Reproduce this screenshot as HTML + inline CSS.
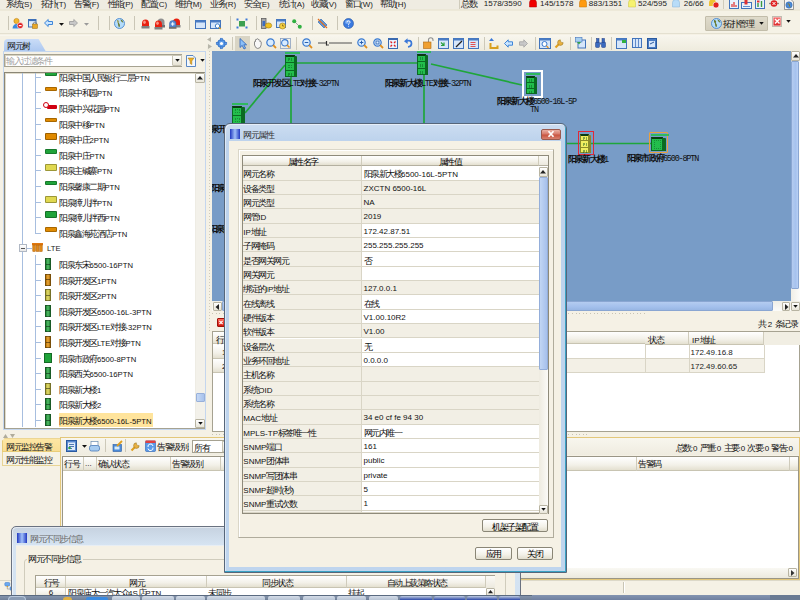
<!DOCTYPE html><html><head><meta charset="utf-8"><style>
html,body{margin:0;padding:0}
body{width:800px;height:600px;overflow:hidden;position:relative;background:#F5F1E5;font-family:"Liberation Sans",sans-serif}
div{position:absolute;box-sizing:border-box}
svg{overflow:visible}
.t{white-space:nowrap;line-height:10px;height:10px;}
i{display:inline-block;font-style:normal;text-align:center}
</style></head><body>
<div style="left:0.00px;top:0.00px;width:800.00px;height:600.00px;background:#F5F1E5"></div>
<div style="left:0.00px;top:0.00px;width:800.00px;height:9.00px;background:#EFECE2"></div>
<div style="left:0.00px;top:8.60px;width:800.00px;height:2.40px;background:linear-gradient(#EAE6D6,#EEEADA)"></div>
<div class="t" style="left:6.40px;top:-0.80px;font-size:8px;color:#222;"><i style="width:7.5px;font-size:9px">系</i><i style="width:7.5px;font-size:9px">统</i>(S)</div>
<div class="t" style="left:41.00px;top:-0.80px;font-size:8px;color:#222;"><i style="width:7.5px;font-size:9px">拓</i><i style="width:7.5px;font-size:9px">扑</i>(T)</div>
<div class="t" style="left:74.00px;top:-0.80px;font-size:8px;color:#222;"><i style="width:7.5px;font-size:9px">告</i><i style="width:7.5px;font-size:9px">警</i>(F)</div>
<div class="t" style="left:107.50px;top:-0.80px;font-size:8px;color:#222;"><i style="width:7.5px;font-size:9px">性</i><i style="width:7.5px;font-size:9px">能</i>(P)</div>
<div class="t" style="left:141.00px;top:-0.80px;font-size:8px;color:#222;"><i style="width:7.5px;font-size:9px">配</i><i style="width:7.5px;font-size:9px">置</i>(C)</div>
<div class="t" style="left:175.00px;top:-0.80px;font-size:8px;color:#222;"><i style="width:7.5px;font-size:9px">维</i><i style="width:7.5px;font-size:9px">护</i>(M)</div>
<div class="t" style="left:210.00px;top:-0.80px;font-size:8px;color:#222;"><i style="width:7.5px;font-size:9px">业</i><i style="width:7.5px;font-size:9px">务</i>(R)</div>
<div class="t" style="left:244.00px;top:-0.80px;font-size:8px;color:#222;"><i style="width:7.5px;font-size:9px">安</i><i style="width:7.5px;font-size:9px">全</i>(E)</div>
<div class="t" style="left:279.00px;top:-0.80px;font-size:8px;color:#222;"><i style="width:7.5px;font-size:9px">统</i><i style="width:7.5px;font-size:9px">计</i>(A)</div>
<div class="t" style="left:311.00px;top:-0.80px;font-size:8px;color:#222;"><i style="width:7.5px;font-size:9px">收</i><i style="width:7.5px;font-size:9px">藏</i>(V)</div>
<div class="t" style="left:345.00px;top:-0.80px;font-size:8px;color:#222;"><i style="width:7.5px;font-size:9px">窗</i><i style="width:7.5px;font-size:9px">口</i>(W)</div>
<div class="t" style="left:380.00px;top:-0.80px;font-size:8px;color:#222;"><i style="width:7.5px;font-size:9px">帮</i><i style="width:7.5px;font-size:9px">助</i>(H)</div>
<div style="left:459.00px;top:0.00px;width:1.00px;height:9.00px;background:#CFCBBB"></div>
<div class="t" style="left:461.00px;top:-1.20px;font-size:8px;color:#222;"><i style="width:7.5px;font-size:9px">总</i><i style="width:7.5px;font-size:9px">数</i>:</div>
<div class="t" style="left:483.80px;top:-1.20px;font-size:8px;color:#222;">1578/3590</div>
<svg style="position:absolute;left:528.5px;top:-1px" width="8" height="9" viewBox="0 0 8 9"><path d="M.5 8 V3.5 Q.5 .5 4 .5 Q7.5 .5 7.5 3.5 V8Z" fill="#F00000" stroke="#B00000" stroke-width=".5"/></svg>
<div class="t" style="left:540.00px;top:-1.20px;font-size:8px;color:#222;">145/1578</div>
<svg style="position:absolute;left:578.5px;top:-1px" width="8" height="9" viewBox="0 0 8 9"><path d="M.5 8 V3.5 Q.5 .5 4 .5 Q7.5 .5 7.5 3.5 V8Z" fill="#FF9A10" stroke="#C07000" stroke-width=".5"/></svg>
<div class="t" style="left:588.80px;top:-1.20px;font-size:8px;color:#222;">883/1351</div>
<svg style="position:absolute;left:627.5px;top:-1px" width="8" height="9" viewBox="0 0 8 9"><path d="M.5 8 V3.5 Q.5 .5 4 .5 Q7.5 .5 7.5 3.5 V8Z" fill="#F6F270" stroke="#C8C040" stroke-width=".5"/></svg>
<div class="t" style="left:638.00px;top:-1.20px;font-size:8px;color:#222;">524/595</div>
<svg style="position:absolute;left:672px;top:-1px" width="8" height="9" viewBox="0 0 8 9"><path d="M.5 8 V3.5 Q.5 .5 4 .5 Q7.5 .5 7.5 3.5 V8Z" fill="#B8DCF8" stroke="#80B0D8" stroke-width=".5"/></svg>
<div class="t" style="left:683.80px;top:-1.20px;font-size:8px;color:#222;">26/66</div>
<svg style="position:absolute;left:707.5px;top:-1px" width="12" height="10" viewBox="0 0 12 10"><path d="M1 7 V3.5 Q1 .5 4.5 .5 Q8 .5 8 3.5 V7Z" fill="#F0C030"/><circle cx="8" cy="6" r="3" fill="#E02020" stroke="#fff" stroke-width=".6"/></svg>
<div style="left:722.50px;top:0.00px;width:1.00px;height:9.00px;background:#CFCBBB"></div>
<svg style="position:absolute;left:728.5px;top:-1px" width="10" height="10" viewBox="0 0 10 10"><rect x=".5" y=".5" width="9" height="9" fill="#EAF2FC" stroke="#4274BC"/><path d="M3 8 V5 M5 8 V3 M7 8 V6" stroke="#E03030" stroke-width="1.2"/></svg>
<svg style="position:absolute;left:740.5px;top:-1px" width="11" height="10" viewBox="0 0 11 10"><rect x=".5" y="3.5" width="10" height="6" fill="#EAF2FC" stroke="#4274BC"/><rect x="3.5" y=".5" width="3" height="5" fill="#E03030"/><path d="M2 7.5 H9" stroke="#4274BC" stroke-width=".8"/></svg>
<svg style="position:absolute;left:754.5px;top:-1px" width="10" height="10" viewBox="0 0 10 10"><rect x=".5" y=".5" width="9" height="9" fill="#EAF2FC" stroke="#4274BC"/><path d="M3 8 V4 M6.5 8 V2" stroke="#3A9A40" stroke-width="1.4"/><rect x="2" y="1.5" width="2.5" height="2" fill="#E03030"/></svg>
<svg style="position:absolute;left:768.5px;top:-1px" width="10" height="9" viewBox="0 0 10 9"><path d="M0 4.5 H10" stroke="#8A8A8A" stroke-width="1.3"/><circle cx="5" cy="4.5" r="3.3" fill="#E02020"/><path d="M3.5 3 L6.5 6 M6.5 3 L3.5 6" stroke="#fff" stroke-width="1"/></svg>
<svg style="position:absolute;left:783.5px;top:-1px" width="10" height="11" viewBox="0 0 10 11"><path d="M.5 .5 H7 L9.5 3 V10.5 H.5Z" fill="#F4F4F4" stroke="#707070" stroke-width=".7"/><circle cx="5" cy="6" r="3.2" fill="#4A8AD8" stroke="#2A60A8" stroke-width=".5"/><path d="M3.5 5 Q5 4 5.5 6 Q5 7.5 6.5 8" stroke="#8A7A30" stroke-width="1" fill="none"/></svg>
<div style="left:0.00px;top:11.00px;width:800.00px;height:22.50px;background:#F5F2E6"></div>
<div style="left:0.00px;top:33.30px;width:800.00px;height:1.20px;background:#E4E0D0"></div>
<div style="left:0.00px;top:34.50px;width:800.00px;height:1.00px;background:#F8F6EE"></div>
<div style="left:7.50px;top:16.00px;width:1.00px;height:14.00px;background:#CAC6B6"></div>
<div style="left:97.50px;top:16.00px;width:1.00px;height:14.00px;background:#CAC6B6"></div>
<div style="left:108.50px;top:16.00px;width:1.00px;height:14.00px;background:#CAC6B6"></div>
<div style="left:134.00px;top:16.00px;width:1.00px;height:14.00px;background:#CAC6B6"></div>
<div style="left:189.00px;top:16.00px;width:1.00px;height:14.00px;background:#CAC6B6"></div>
<div style="left:230.00px;top:16.00px;width:1.00px;height:14.00px;background:#CAC6B6"></div>
<div style="left:256.00px;top:16.00px;width:1.00px;height:14.00px;background:#CAC6B6"></div>
<div style="left:312.00px;top:16.00px;width:1.00px;height:14.00px;background:#CAC6B6"></div>
<div style="left:337.00px;top:16.00px;width:1.00px;height:14.00px;background:#CAC6B6"></div>
<svg style="position:absolute;left:12px;top:17.5px" width="12" height="11" viewBox="0 0 12 11"><circle cx="4.5" cy="3" r="2.6" fill="#F2B830" stroke="#C08010" stroke-width=".6"/><path d="M0.5 10.5 Q1 6 4.5 6 Q8 6 8.5 10.5Z" fill="#3A8AE0"/><circle cx="8.2" cy="7.6" r="3" fill="#E02020" stroke="#fff" stroke-width=".6"/><path d="M6.8 7.6 H9.6" stroke="#fff" stroke-width="1.2"/></svg>
<svg style="position:absolute;left:27.5px;top:18.5px" width="10" height="10" viewBox="0 0 10 10"><rect x=".5" y=".5" width="7.5" height="7.5" fill="#DDEBFA" stroke="#3E70B8"/><rect x=".5" y=".5" width="7.5" height="1.6" fill="#3E70B8"/><rect x="4.5" y="5" width="5" height="4.5" fill="#E8A828" stroke="#9A6A10" stroke-width=".5"/><path d="M5.5 5 V3.8 Q7 2.2 8.5 3.8 V5" stroke="#777" fill="none" stroke-width=".8"/></svg>
<svg style="position:absolute;left:44px;top:19px" width="9" height="8" viewBox="0 0 9 8"><path d="M.5 4 L4.2 .5 V2.5 H8.5 V5.5 H4.2 V7.5Z" fill="#CBE6FF" stroke="#2C7AD6" stroke-width=".9"/></svg>
<svg style="position:absolute;left:59px;top:22.5px" width="5" height="3" viewBox="0 0 5 3"><path d="M0 0 H5 L2.5 2.8Z" fill="#111"/></svg>
<svg style="position:absolute;left:69px;top:19px" width="9" height="8" viewBox="0 0 9 8"><path d="M8.5 4 L4.8 .5 V2.5 H.5 V5.5 H4.8 V7.5Z" fill="#C8C8C8" stroke="#A0A0A0" stroke-width=".9"/></svg>
<svg style="position:absolute;left:84px;top:22.5px" width="5" height="3" viewBox="0 0 5 3"><path d="M0 0 H5 L2.5 2.8Z" fill="#9A9A9A"/></svg>
<svg style="position:absolute;left:113.5px;top:17.5px" width="11" height="11" viewBox="0 0 11 11"><circle cx="5.5" cy="5.5" r="5" fill="#B4DCFA" stroke="#4A88D0" stroke-width=".9"/><path d="M3 2 Q5 1.8 5.2 3.5 Q4.2 5 5.8 6.5 Q6.5 8.5 5 9.5 Q3.8 7 4 5.5 Q2.5 4 3 2Z M6.5 1.2 Q8.8 2 9.5 4.5 Q8 4.5 7 3Z" fill="#6A7A30"/><circle cx="4" cy="3.5" r="1.5" fill="#fff" opacity=".35"/></svg>
<svg style="position:absolute;left:141px;top:18.5px" width="9" height="10" viewBox="0 0 9 10"><path d="M1 7 V4.5 Q1 .5 4.5 .5 Q8 .5 8 4.5 V7Z" fill="#E82010"/><ellipse cx="3.5" cy="3.2" rx="1.3" ry="1.8" fill="#FFB0A0" opacity=".8"/><rect x=".5" y="7" width="8" height="2.5" fill="#808080"/></svg>
<svg style="position:absolute;left:156px;top:18px" width="9" height="10" viewBox="0 0 9 10"><path d="M1.5 7 V4 Q1.5 .5 5 .5 Q8.5 .5 8.5 4 V7Z" fill="#909090"/><rect x="1" y="7" width="8" height="2.5" fill="#707070"/></svg>
<svg style="position:absolute;left:154px;top:19.5px" width="9" height="10" viewBox="0 0 9 10"><path d="M1 7 V4.5 Q1 .5 4.5 .5 Q8 .5 8 4.5 V7Z" fill="#E82010"/><ellipse cx="3.5" cy="3.2" rx="1.3" ry="1.8" fill="#FFB0A0" opacity=".8"/><rect x=".5" y="7" width="8" height="2.5" fill="#808080"/></svg>
<svg style="position:absolute;left:169px;top:18px" width="12" height="11" viewBox="0 0 12 11"><path d="M4 7 V4 Q4 .5 7.5 .5 Q11 .5 11 4 V7Z" fill="#E82010"/><rect x="3.5" y="7" width="8" height="2.5" fill="#808080"/><path d="M.5 9 V5.5 Q.5 2.5 4 2.5 Q7 2.5 7 5.5 V9Z" fill="#5A8AD0" stroke="#3060A0" stroke-width=".5"/><path d="M2 6 H5.5 M3.7 4.2 V7.8" stroke="#fff" stroke-width="1"/><rect x="0" y="9" width="7.5" height="1.8" fill="#707070"/></svg>
<svg style="position:absolute;left:195px;top:19.5px" width="11" height="9" viewBox="0 0 11 9"><rect x=".5" y=".5" width="10" height="8" fill="#D6E6FA" stroke="#4274BC" stroke-width="1"/><rect x=".5" y=".5" width="10" height="2" fill="#4A7CC4"/></svg>
<svg style="position:absolute;left:210px;top:19.5px" width="11" height="9" viewBox="0 0 11 9"><rect x=".5" y=".5" width="10" height="8" fill="#D6E6FA" stroke="#4274BC" stroke-width="1"/><rect x=".5" y=".5" width="10" height="2" fill="#4A7CC4"/><circle cx="7.5" cy="6" r="2.2" fill="#fff" stroke="#2A70C0" stroke-width=".9"/><path d="M9 7.5 L10.8 9" stroke="#E0A020" stroke-width="1.2"/></svg>
<svg style="position:absolute;left:235.5px;top:17.5px" width="12" height="11" viewBox="0 0 12 11"><rect x="3" y="3" width="6" height="5.5" fill="#3CA050"/><g fill="#3C78D8"><rect x=".5" y=".5" width="2" height="2"/><rect x="9.5" y=".5" width="2" height="2"/><rect x=".5" y="8.5" width="2" height="2"/><rect x="9.5" y="8.5" width="2" height="2"/></g></svg>
<svg style="position:absolute;left:261px;top:17.5px" width="11" height="11" viewBox="0 0 11 11"><rect x=".5" y=".5" width="4.5" height="10" fill="#A8A8A8" stroke="#606060" stroke-width=".8"/><rect x="1.5" y="3" width="2.5" height="5" fill="#3C6CC0"/><ellipse cx="7.5" cy="7.5" rx="3.2" ry="2.6" fill="#F0C020" stroke="#A07810" stroke-width=".6"/></svg>
<svg style="position:absolute;left:276px;top:18.5px" width="10" height="9" viewBox="0 0 10 9"><rect x=".5" y=".5" width="9" height="8" fill="#D6E6FA" stroke="#4274BC" stroke-width="1"/><rect x=".5" y=".5" width="9" height="2" fill="#4A7CC4"/><circle cx="6.5" cy="7" r="3" fill="#F4D040" stroke="#A07810" stroke-width=".6"/><path d="M6.5 5.5 V7 H8" stroke="#604000" stroke-width=".6" fill="none"/></svg>
<svg style="position:absolute;left:292px;top:18.5px" width="10" height="10" viewBox="0 0 10 10"><path d="M2 2 L8 8" stroke="#A0A0A0" stroke-width="1"/><circle cx="2.2" cy="2.2" r="2" fill="#30B040"/><circle cx="7.8" cy="7.8" r="2" fill="#30B040"/></svg>
<svg style="position:absolute;left:316.5px;top:17.5px" width="11" height="11" viewBox="0 0 11 11"><path d="M1 4 L4 1 L10 7 L7 10Z" fill="#5A98E0" stroke="#2A60A8" stroke-width=".6"/><path d="M1 1 L10 10" stroke="#E07020" stroke-width="1.3"/></svg>
<svg style="position:absolute;left:342.5px;top:17.5px" width="11" height="11" viewBox="0 0 11 11"><circle cx="5.5" cy="5.5" r="5" fill="#3A7AE0" stroke="#2050A0" stroke-width=".6"/><circle cx="4" cy="4" r="2" fill="#9CC8FF" opacity=".6"/><path d="M4 4.3 Q4 2.8 5.6 2.8 Q7.2 2.8 7 4.3 Q6.8 5.3 5.6 5.8 V6.8 M5.6 7.8 V8.6" stroke="#fff" stroke-width="1" fill="none"/></svg>
<div style="left:704.50px;top:15.50px;width:63.50px;height:15.00px;background:linear-gradient(#DFDBCB,#D3CEBC);border:1px solid #C2BDAA;border-radius:1px"></div>
<svg style="position:absolute;left:710.5px;top:17.5px" width="11" height="11" viewBox="0 0 11 11"><circle cx="5.5" cy="5.5" r="5" fill="#B4DCFA" stroke="#4A88D0" stroke-width=".9"/><path d="M3 2 Q5 1.8 5.2 3.5 Q4.2 5 5.8 6.5 Q6.5 8.5 5 9.5 Q3.8 7 4 5.5 Q2.5 4 3 2Z M6.5 1.2 Q8.8 2 9.5 4.5 Q8 4.5 7 3Z" fill="#6A7A30"/></svg>
<div class="t" style="left:723.00px;top:19.20px;font-size:8px;color:#111;"><i style="width:7.5px;font-size:9px">拓</i><i style="width:7.5px;font-size:9px">扑</i><i style="width:7.5px;font-size:9px">管</i><i style="width:7.5px;font-size:9px">理</i></div>
<svg style="position:absolute;left:759px;top:22px" width="5" height="3" viewBox="0 0 6 4"><path d="M0 0 H6 L3 3.5 Z" fill="#111"/></svg>
<div style="left:771.50px;top:16.00px;width:10.50px;height:10.50px;background:linear-gradient(#F87070,#D82828);border:1px solid #C0BCB0;box-shadow:inset 0 0 0 .5px #F8D0D0"></div>
<svg style="position:absolute;left:773.5px;top:18px" width="6.5" height="6.5" viewBox="0 0 6.5 6.5"><path d="M1 1 L5.5 5.5 M5.5 1 L1 5.5" stroke="#fff" stroke-width="1.4"/></svg>
<svg style="position:absolute;left:786px;top:19.5px" width="5" height="3" viewBox="0 0 6 4"><path d="M0 0 H6 L3 3.5 Z" fill="#111"/></svg>
<div style="left:4px;top:38.7px;width:42px;height:13px;background:linear-gradient(#CADCF7,#ABC7F0);border-radius:4px 0 0 0;clip-path:polygon(0 0,82% 0,100% 100%,0 100%)"></div>
<div class="t" style="left:7.00px;top:41.00px;font-size:8px;color:#222;"><i style="width:7.5px;font-size:9px">网</i><i style="width:7.5px;font-size:9px">元</i><i style="width:7.5px;font-size:9px">树</i></div>
<div style="left:3.00px;top:51.00px;width:203.00px;height:1.00px;background:#A9C6F0"></div>
<div style="left:3.00px;top:51.00px;width:203.00px;height:379.00px;border:1px solid #C4D6EE"></div>
<div style="left:209.00px;top:51.00px;width:1.00px;height:280.00px;background:repeating-linear-gradient(#CFCBBB 0 1px,transparent 1px 3px)"></div>
<div style="left:4.00px;top:53.70px;width:178.00px;height:13.00px;background:#fff;border:1px solid #A6A291;border-right:none;box-shadow:inset 1px 1px 0 #D6D2C2"></div>
<div class="t" style="left:6.00px;top:56.20px;font-size:8px;color:#A0A0A0;"><i style="width:7.5px;font-size:9px">输</i><i style="width:7.5px;font-size:9px">入</i><i style="width:7.5px;font-size:9px">过</i><i style="width:7.5px;font-size:9px">滤</i><i style="width:7.5px;font-size:9px">条</i><i style="width:7.5px;font-size:9px">件</i></div>
<div style="left:171.50px;top:54.70px;width:10.50px;height:11.30px;background:linear-gradient(#FDFDFB,#E6E2D4);border:1px solid #C8C4B4;border-radius:1px"></div>
<svg style="position:absolute;left:174.5px;top:59px" width="5" height="3" viewBox="0 0 6 4"><path d="M0 0 H6 L3 3.5 Z" fill="#111"/></svg>
<svg style="position:absolute;left:185.5px;top:54.5px" width="10" height="12" viewBox="0 0 10 12"><path d="M.5 .5 H7 L9.5 3 V11.5 H.5Z" fill="#F4F8FC" stroke="#4A7CC0" stroke-width=".9"/><path d="M2 3 H8 L5.8 6 V9.5 L4.2 8.5 V6Z" fill="#F0B020" stroke="#A07010" stroke-width=".5"/></svg>
<svg style="position:absolute;left:199.5px;top:59px" width="5" height="3" viewBox="0 0 6 4"><path d="M0 0 H6 L3 3.5 Z" fill="#111"/></svg>
<div style="left:4.00px;top:72.40px;width:201.00px;height:357.00px;background:#fff;border:1px solid #A6A291;border-top-color:#8A8676;border-left-color:#8A8676;box-shadow:inset 1px 1px 0 #E0DCCC"></div>
<div style="left:5px;top:73.4px;width:190px;height:354px;overflow:hidden">
<div style="left:17.20px;top:-13.40px;width:1.00px;height:400.00px;background:#A7BEDF"></div>
<div style="left:29.70px;top:-13.40px;width:1.00px;height:174.00px;background:#A7BEDF"></div>
<div style="left:29.70px;top:181.60px;width:1.00px;height:200.00px;background:#A7BEDF"></div>
<div style="left:30.00px;top:3.50px;width:5.50px;height:1.00px;background:#A7BEDF"></div>
<div style="left:39.50px;top:-2.00px;width:12.50px;height:4.20px;background:#1FA33A;border:1px solid rgba(0,0,0,.25);border-radius:1px"></div>
<div class="t" style="left:54.40px;top:-0.50px;font-size:7.7px;color:#111;"><i style="width:7.5px;font-size:9px">阳</i><i style="width:7.5px;font-size:9px">泉</i><i style="width:7.5px;font-size:9px">中</i><i style="width:7.5px;font-size:9px">国</i><i style="width:7.5px;font-size:9px">人</i><i style="width:7.5px;font-size:9px">民</i><i style="width:7.5px;font-size:9px">银</i><i style="width:7.5px;font-size:9px">行</i><i style="width:7.5px;font-size:9px">二</i><i style="width:7.5px;font-size:9px">层</i>PTN</div>
<div style="left:30.00px;top:19.10px;width:5.50px;height:1.00px;background:#A7BEDF"></div>
<div style="left:39.50px;top:13.60px;width:12.50px;height:4.20px;background:#E08A00;border:1px solid rgba(0,0,0,.25);border-radius:1px"></div>
<div class="t" style="left:54.40px;top:15.10px;font-size:7.7px;color:#111;"><i style="width:7.5px;font-size:9px">阳</i><i style="width:7.5px;font-size:9px">泉</i><i style="width:7.5px;font-size:9px">中</i><i style="width:7.5px;font-size:9px">和</i><i style="width:7.5px;font-size:9px">园</i>PTN</div>
<div style="left:30.00px;top:34.70px;width:5.50px;height:1.00px;background:#A7BEDF"></div>
<div style="left:42.00px;top:31.20px;width:10.00px;height:4.50px;background:#D00010;border-radius:1px"></div>
<div style="left:38.00px;top:28.70px;width:6.00px;height:6.00px;background:#fff;border:1.5px solid #D00010;border-radius:50%"></div>
<div class="t" style="left:54.40px;top:30.70px;font-size:7.7px;color:#111;"><i style="width:7.5px;font-size:9px">阳</i><i style="width:7.5px;font-size:9px">泉</i><i style="width:7.5px;font-size:9px">中</i><i style="width:7.5px;font-size:9px">兴</i><i style="width:7.5px;font-size:9px">花</i><i style="width:7.5px;font-size:9px">园</i>PTN</div>
<div style="left:30.00px;top:50.30px;width:5.50px;height:1.00px;background:#A7BEDF"></div>
<div style="left:39.50px;top:44.80px;width:12.50px;height:4.20px;background:#E08A00;border:1px solid rgba(0,0,0,.25);border-radius:1px"></div>
<div class="t" style="left:54.40px;top:46.30px;font-size:7.7px;color:#111;"><i style="width:7.5px;font-size:9px">阳</i><i style="width:7.5px;font-size:9px">泉</i><i style="width:7.5px;font-size:9px">中</i><i style="width:7.5px;font-size:9px">移</i>PTN</div>
<div style="left:30.00px;top:65.90px;width:5.50px;height:1.00px;background:#A7BEDF"></div>
<div style="left:39.50px;top:59.90px;width:12.50px;height:7.00px;background:#E08A00;border:1px solid rgba(0,0,0,.3);border-radius:1px"></div>
<div class="t" style="left:54.40px;top:61.90px;font-size:7.7px;color:#111;"><i style="width:7.5px;font-size:9px">阳</i><i style="width:7.5px;font-size:9px">泉</i><i style="width:7.5px;font-size:9px">中</i><i style="width:7.5px;font-size:9px">庄</i>2PTN</div>
<div style="left:30.00px;top:81.50px;width:5.50px;height:1.00px;background:#A7BEDF"></div>
<div style="left:39.50px;top:76.00px;width:12.50px;height:4.20px;background:#1FA33A;border:1px solid rgba(0,0,0,.25);border-radius:1px"></div>
<div class="t" style="left:54.40px;top:77.50px;font-size:7.7px;color:#111;"><i style="width:7.5px;font-size:9px">阳</i><i style="width:7.5px;font-size:9px">泉</i><i style="width:7.5px;font-size:9px">中</i><i style="width:7.5px;font-size:9px">庄</i>PTN</div>
<div style="left:30.00px;top:97.10px;width:5.50px;height:1.00px;background:#A7BEDF"></div>
<div style="left:39.50px;top:91.10px;width:12.50px;height:7.00px;background:#E0D850;border:1px solid rgba(0,0,0,.3);border-radius:1px"></div>
<div class="t" style="left:54.40px;top:93.10px;font-size:7.7px;color:#111;"><i style="width:7.5px;font-size:9px">阳</i><i style="width:7.5px;font-size:9px">泉</i><i style="width:7.5px;font-size:9px">主</i><i style="width:7.5px;font-size:9px">碱</i><i style="width:7.5px;font-size:9px">寨</i>PTN</div>
<div style="left:30.00px;top:112.70px;width:5.50px;height:1.00px;background:#A7BEDF"></div>
<div style="left:39.50px;top:107.20px;width:12.50px;height:4.20px;background:#1FA33A;border:1px solid rgba(0,0,0,.25);border-radius:1px"></div>
<div class="t" style="left:54.40px;top:108.70px;font-size:7.7px;color:#111;"><i style="width:7.5px;font-size:9px">阳</i><i style="width:7.5px;font-size:9px">泉</i><i style="width:7.5px;font-size:9px">馨</i><i style="width:7.5px;font-size:9px">康</i><i style="width:7.5px;font-size:9px">二</i><i style="width:7.5px;font-size:9px">期</i>PTN</div>
<div style="left:30.00px;top:128.30px;width:5.50px;height:1.00px;background:#A7BEDF"></div>
<div style="left:39.50px;top:122.30px;width:12.50px;height:7.00px;background:#E0D850;border:1px solid rgba(0,0,0,.3);border-radius:1px"></div>
<div class="t" style="left:54.40px;top:124.30px;font-size:7.7px;color:#111;"><i style="width:7.5px;font-size:9px">阳</i><i style="width:7.5px;font-size:9px">泉</i><i style="width:7.5px;font-size:9px">獐</i><i style="width:7.5px;font-size:9px">儿</i><i style="width:7.5px;font-size:9px">拌</i>PTN</div>
<div style="left:30.00px;top:143.90px;width:5.50px;height:1.00px;background:#A7BEDF"></div>
<div style="left:39.50px;top:137.90px;width:12.50px;height:7.00px;background:#1FA33A;border:1px solid rgba(0,0,0,.3);border-radius:1px"></div>
<div class="t" style="left:54.40px;top:139.90px;font-size:7.7px;color:#111;"><i style="width:7.5px;font-size:9px">阳</i><i style="width:7.5px;font-size:9px">泉</i><i style="width:7.5px;font-size:9px">獐</i><i style="width:7.5px;font-size:9px">儿</i><i style="width:7.5px;font-size:9px">拌</i><i style="width:7.5px;font-size:9px">西</i>PTN</div>
<div style="left:30.00px;top:159.50px;width:5.50px;height:1.00px;background:#A7BEDF"></div>
<div style="left:39.50px;top:154.00px;width:12.50px;height:4.20px;background:#E08A00;border:1px solid rgba(0,0,0,.25);border-radius:1px"></div>
<div class="t" style="left:54.40px;top:155.50px;font-size:7.7px;color:#111;"><i style="width:7.5px;font-size:9px">阳</i><i style="width:7.5px;font-size:9px">泉</i><i style="width:7.5px;font-size:9px">鑫</i><i style="width:7.5px;font-size:9px">海</i><i style="width:7.5px;font-size:9px">苑</i><i style="width:7.5px;font-size:9px">酒</i><i style="width:7.5px;font-size:9px">店</i>PTN</div>
<div style="left:14.00px;top:171.10px;width:8.00px;height:8.00px;background:linear-gradient(#fff,#E8E8E8);border:1px solid #B0B8C4"></div>
<div style="left:15.80px;top:174.60px;width:4.50px;height:1.00px;background:#555"></div>
<div style="left:22.00px;top:175.10px;width:5.00px;height:1.00px;background:#A7BEDF"></div>
<svg style="position:absolute;left:27px;top:170.1px" width="11" height="9" viewBox="0 0 11 9"><rect x="0" y="0" width="11" height="2.2" fill="#E07810"/><g fill="#E08A18" stroke="#B05A00" stroke-width=".5"><rect x=".8" y="2" width="2.6" height="6.5"/><rect x="4.2" y="2" width="2.6" height="6.5"/><rect x="7.6" y="2" width="2.6" height="6.5"/></g></svg>
<div class="t" style="left:42.00px;top:171.10px;font-size:7.7px;color:#222;">LTE</div>
<div style="left:30.00px;top:190.70px;width:5.50px;height:1.00px;background:#A7BEDF"></div>
<div style="left:39.50px;top:184.70px;width:6.00px;height:12.00px;background:linear-gradient(90deg,rgba(0,0,0,.15),rgba(255,255,255,.25) 50%,rgba(0,0,0,.2)),#1FA33A;border:1px solid rgba(0,0,0,.4)"></div>
<div style="left:40.50px;top:190.20px;width:4.00px;height:1.00px;background:rgba(0,0,0,.45)"></div>
<div class="t" style="left:54.40px;top:186.70px;font-size:7.7px;color:#111;"><i style="width:7.5px;font-size:9px">阳</i><i style="width:7.5px;font-size:9px">泉</i><i style="width:7.5px;font-size:9px">东</i><i style="width:7.5px;font-size:9px">宋</i>6500-16PTN</div>
<div style="left:30.00px;top:206.30px;width:5.50px;height:1.00px;background:#A7BEDF"></div>
<div style="left:39.50px;top:200.30px;width:6.00px;height:12.00px;background:linear-gradient(90deg,rgba(0,0,0,.15),rgba(255,255,255,.25) 50%,rgba(0,0,0,.2)),#E08A00;border:1px solid rgba(0,0,0,.4)"></div>
<div style="left:40.50px;top:205.80px;width:4.00px;height:1.00px;background:rgba(0,0,0,.45)"></div>
<div class="t" style="left:54.40px;top:202.30px;font-size:7.7px;color:#111;"><i style="width:7.5px;font-size:9px">阳</i><i style="width:7.5px;font-size:9px">泉</i><i style="width:7.5px;font-size:9px">开</i><i style="width:7.5px;font-size:9px">发</i><i style="width:7.5px;font-size:9px">区</i>1PTN</div>
<div style="left:30.00px;top:221.90px;width:5.50px;height:1.00px;background:#A7BEDF"></div>
<div style="left:39.50px;top:215.90px;width:6.00px;height:12.00px;background:linear-gradient(90deg,rgba(0,0,0,.15),rgba(255,255,255,.25) 50%,rgba(0,0,0,.2)),#D8D040;border:1px solid rgba(0,0,0,.4)"></div>
<div style="left:40.50px;top:221.40px;width:4.00px;height:1.00px;background:rgba(0,0,0,.45)"></div>
<div class="t" style="left:54.40px;top:217.90px;font-size:7.7px;color:#111;"><i style="width:7.5px;font-size:9px">阳</i><i style="width:7.5px;font-size:9px">泉</i><i style="width:7.5px;font-size:9px">开</i><i style="width:7.5px;font-size:9px">发</i><i style="width:7.5px;font-size:9px">区</i>2PTN</div>
<div style="left:30.00px;top:237.50px;width:5.50px;height:1.00px;background:#A7BEDF"></div>
<div style="left:39.50px;top:231.50px;width:6.00px;height:12.00px;background:linear-gradient(90deg,rgba(0,0,0,.15),rgba(255,255,255,.25) 50%,rgba(0,0,0,.2)),#1FA33A;border:1px solid rgba(0,0,0,.4)"></div>
<div style="left:40.50px;top:237.00px;width:4.00px;height:1.00px;background:rgba(0,0,0,.45)"></div>
<div class="t" style="left:54.40px;top:233.50px;font-size:7.7px;color:#111;"><i style="width:7.5px;font-size:9px">阳</i><i style="width:7.5px;font-size:9px">泉</i><i style="width:7.5px;font-size:9px">开</i><i style="width:7.5px;font-size:9px">发</i><i style="width:7.5px;font-size:9px">区</i>6500-16L-3PTN</div>
<div style="left:30.00px;top:253.10px;width:5.50px;height:1.00px;background:#A7BEDF"></div>
<div style="left:39.50px;top:247.10px;width:6.00px;height:12.00px;background:linear-gradient(90deg,rgba(0,0,0,.15),rgba(255,255,255,.25) 50%,rgba(0,0,0,.2)),#1FA33A;border:1px solid rgba(0,0,0,.4)"></div>
<div style="left:40.50px;top:252.60px;width:4.00px;height:1.00px;background:rgba(0,0,0,.45)"></div>
<div class="t" style="left:54.40px;top:249.10px;font-size:7.7px;color:#111;"><i style="width:7.5px;font-size:9px">阳</i><i style="width:7.5px;font-size:9px">泉</i><i style="width:7.5px;font-size:9px">开</i><i style="width:7.5px;font-size:9px">发</i><i style="width:7.5px;font-size:9px">区</i>LTE<i style="width:7.5px;font-size:9px">对</i><i style="width:7.5px;font-size:9px">接</i>-32PTN</div>
<div style="left:30.00px;top:268.70px;width:5.50px;height:1.00px;background:#A7BEDF"></div>
<div style="left:39.50px;top:262.70px;width:6.00px;height:12.00px;background:linear-gradient(90deg,rgba(0,0,0,.15),rgba(255,255,255,.25) 50%,rgba(0,0,0,.2)),#E08A00;border:1px solid rgba(0,0,0,.4)"></div>
<div style="left:40.50px;top:268.20px;width:4.00px;height:1.00px;background:rgba(0,0,0,.45)"></div>
<div class="t" style="left:54.40px;top:264.70px;font-size:7.7px;color:#111;"><i style="width:7.5px;font-size:9px">阳</i><i style="width:7.5px;font-size:9px">泉</i><i style="width:7.5px;font-size:9px">开</i><i style="width:7.5px;font-size:9px">发</i><i style="width:7.5px;font-size:9px">区</i>LTE<i style="width:7.5px;font-size:9px">对</i><i style="width:7.5px;font-size:9px">接</i>PTN</div>
<div style="left:30.00px;top:284.30px;width:5.50px;height:1.00px;background:#A7BEDF"></div>
<div style="left:39.00px;top:279.30px;width:8.00px;height:10.00px;background:#1FA33A;border:1px solid rgba(0,0,0,.35)"></div>
<div class="t" style="left:54.40px;top:280.30px;font-size:7.7px;color:#111;"><i style="width:7.5px;font-size:9px">阳</i><i style="width:7.5px;font-size:9px">泉</i><i style="width:7.5px;font-size:9px">市</i><i style="width:7.5px;font-size:9px">政</i><i style="width:7.5px;font-size:9px">府</i>6500-8PTN</div>
<div style="left:30.00px;top:299.90px;width:5.50px;height:1.00px;background:#A7BEDF"></div>
<div style="left:39.50px;top:293.90px;width:6.00px;height:12.00px;background:linear-gradient(90deg,rgba(0,0,0,.15),rgba(255,255,255,.25) 50%,rgba(0,0,0,.2)),#1FA33A;border:1px solid rgba(0,0,0,.4)"></div>
<div style="left:40.50px;top:299.40px;width:4.00px;height:1.00px;background:rgba(0,0,0,.45)"></div>
<div class="t" style="left:54.40px;top:295.90px;font-size:7.7px;color:#111;"><i style="width:7.5px;font-size:9px">阳</i><i style="width:7.5px;font-size:9px">泉</i><i style="width:7.5px;font-size:9px">西</i><i style="width:7.5px;font-size:9px">关</i>6500-16PTN</div>
<div style="left:30.00px;top:315.50px;width:5.50px;height:1.00px;background:#A7BEDF"></div>
<div style="left:39.50px;top:309.50px;width:6.00px;height:12.00px;background:linear-gradient(90deg,rgba(0,0,0,.15),rgba(255,255,255,.25) 50%,rgba(0,0,0,.2)),#D8D040;border:1px solid rgba(0,0,0,.4)"></div>
<div style="left:40.50px;top:315.00px;width:4.00px;height:1.00px;background:rgba(0,0,0,.45)"></div>
<div class="t" style="left:54.40px;top:311.50px;font-size:7.7px;color:#111;"><i style="width:7.5px;font-size:9px">阳</i><i style="width:7.5px;font-size:9px">泉</i><i style="width:7.5px;font-size:9px">新</i><i style="width:7.5px;font-size:9px">大</i><i style="width:7.5px;font-size:9px">楼</i>1</div>
<div style="left:30.00px;top:331.10px;width:5.50px;height:1.00px;background:#A7BEDF"></div>
<div style="left:39.50px;top:325.10px;width:6.00px;height:12.00px;background:linear-gradient(90deg,rgba(0,0,0,.15),rgba(255,255,255,.25) 50%,rgba(0,0,0,.2)),#1FA33A;border:1px solid rgba(0,0,0,.4)"></div>
<div style="left:40.50px;top:330.60px;width:4.00px;height:1.00px;background:rgba(0,0,0,.45)"></div>
<div class="t" style="left:54.40px;top:327.10px;font-size:7.7px;color:#111;"><i style="width:7.5px;font-size:9px">阳</i><i style="width:7.5px;font-size:9px">泉</i><i style="width:7.5px;font-size:9px">新</i><i style="width:7.5px;font-size:9px">大</i><i style="width:7.5px;font-size:9px">楼</i>2</div>
<div style="left:30.00px;top:346.70px;width:5.50px;height:1.00px;background:#A7BEDF"></div>
<div style="left:39.50px;top:340.70px;width:6.00px;height:12.00px;background:linear-gradient(90deg,rgba(0,0,0,.15),rgba(255,255,255,.25) 50%,rgba(0,0,0,.2)),#1FA33A;border:1px solid rgba(0,0,0,.4)"></div>
<div style="left:40.50px;top:346.20px;width:4.00px;height:1.00px;background:rgba(0,0,0,.45)"></div>
<div style="left:53.80px;top:339.70px;width:94.20px;height:14.00px;background:#FFE49C"></div>
<div class="t" style="left:54.40px;top:342.70px;font-size:7.7px;color:#111;"><i style="width:7.5px;font-size:9px">阳</i><i style="width:7.5px;font-size:9px">泉</i><i style="width:7.5px;font-size:9px">新</i><i style="width:7.5px;font-size:9px">大</i><i style="width:7.5px;font-size:9px">楼</i>6500-16L-5PTN</div>
</div>
<div style="left:195.00px;top:73.40px;width:10.00px;height:354.00px;background:#F3F1EA;border-left:1px solid #EEECE4"></div>
<div style="left:195.00px;top:73.40px;width:10.00px;height:9.50px;background:linear-gradient(#FFFFFF,#E8E5D8);border:1px solid #B8B4A2;border-radius:1px"></div>
<svg style="position:absolute;left:197px;top:76px" width="6" height="4" viewBox="0 0 6 4"><path d="M0 3.5 H6 L3 0 Z" fill="#222"/></svg>
<div style="left:195.00px;top:418.50px;width:10.00px;height:9.50px;background:linear-gradient(#FFFFFF,#E8E5D8);border:1px solid #B8B4A2;border-radius:1px"></div>
<svg style="position:absolute;left:197.5px;top:422px" width="5" height="3" viewBox="0 0 6 4"><path d="M0 0 H6 L3 3.5 Z" fill="#111"/></svg>
<div style="left:195.50px;top:392.50px;width:9.00px;height:9.00px;background:linear-gradient(90deg,#C5D8F5,#A8C2EC);border:1px solid #98B0DA;border-radius:1px"></div>
<svg style="position:absolute;left:2.5px;top:433.5px" width="12" height="4" viewBox="0 0 12 4"><path d="M0 4 L2.5 0 L5 4 Z M7 0 H12 L9.5 4 Z" fill="#B0AC9C"/></svg>
<div style="left:207.00px;top:35.00px;width:593.00px;height:16.00px;background:linear-gradient(#F8F6EE,#EEEBDD)"></div>
<svg style="position:absolute;left:207px;top:37px" width="5" height="12" viewBox="0 0 5 12"><path d="M4 0 L0 2.5 L4 5 Z M1 7 L5 9.5 L1 12 Z" fill="#B8B6AA"/></svg>
<div style="left:235.00px;top:36.00px;width:14.50px;height:15.00px;background:#D9D5C5"></div>
<div style="left:232.00px;top:37.00px;width:1.00px;height:13.00px;background:#CDC9B9"></div>
<div style="left:296.00px;top:37.00px;width:1.00px;height:13.00px;background:#CDC9B9"></div>
<div style="left:417.80px;top:37.00px;width:1.00px;height:13.00px;background:#CDC9B9"></div>
<div style="left:484.00px;top:37.00px;width:1.00px;height:13.00px;background:#CDC9B9"></div>
<div style="left:535.00px;top:37.00px;width:1.00px;height:13.00px;background:#CDC9B9"></div>
<div style="left:570.00px;top:37.00px;width:1.00px;height:13.00px;background:#CDC9B9"></div>
<div style="left:591.00px;top:37.00px;width:1.00px;height:13.00px;background:#CDC9B9"></div>
<div style="left:611.00px;top:37.00px;width:1.00px;height:13.00px;background:#CDC9B9"></div>
<svg style="position:absolute;left:215.5px;top:37.5px" width="11" height="11" viewBox="0 0 11 11"><g transform="translate(5.5 5.5)"><circle r="4" fill="#5A9AE8" stroke="#2A68C0" stroke-width=".8"/><g fill="#5A9AE8" stroke="#2A68C0" stroke-width=".5"><rect x="-1" y="-5.3" width="2" height="2"/><rect x="-1" y="3.3" width="2" height="2"/><rect x="-5.3" y="-1" width="2" height="2"/><rect x="3.3" y="-1" width="2" height="2"/></g><circle r="1.6" fill="#fff"/></g></svg>
<svg style="position:absolute;left:239px;top:37.5px" width="8" height="12" viewBox="0 0 8 12"><path d="M1 .5 V9.5 L3.2 7.4 L5 11 L6.6 10.2 L4.8 6.8 H7.6 Z" fill="#8CC0F8" stroke="#2860B8" stroke-width=".8"/></svg>
<svg style="position:absolute;left:251.5px;top:37.5px" width="11" height="11" viewBox="0 0 11 11"><path d="M2.5 7 V4 Q2.5 3 3.5 3.5 V2 Q3.5 1 4.5 1.5 V1.2 Q5.5 .2 6.3 1.2 V1.8 Q7.3 1.2 7.8 2.3 V3.5 Q8.8 3 9.2 4 V6.8 Q8.8 10.5 5.8 10.5 Q3.5 10.5 2.5 7Z" fill="#F8F8F8" stroke="#707070" stroke-width=".8"/></svg>
<svg style="position:absolute;left:265.5px;top:37.5px" width="11" height="11" viewBox="0 0 11 11"><circle cx="4.5" cy="4.5" r="3.7" fill="#D8ECFF" stroke="#3A7AD0" stroke-width="1.2"/><path d="M7.2 7.2 L10 10" stroke="#E09020" stroke-width="1.8"/></svg>
<svg style="position:absolute;left:279.5px;top:37.5px" width="11" height="11" viewBox="0 0 11 11"><rect x=".5" y=".5" width="10" height="10" fill="none" stroke="#8AA0C0" stroke-width=".8"/><circle cx="4.8" cy="4.8" r="3.2" fill="#D8ECFF" stroke="#3A7AD0" stroke-width="1.1"/><path d="M7 7 L9.5 9.5" stroke="#E09020" stroke-width="1.6"/></svg>
<svg style="position:absolute;left:301.5px;top:37.5px" width="11" height="11" viewBox="0 0 11 11"><circle cx="4.5" cy="4.5" r="3.7" fill="#D8ECFF" stroke="#3A7AD0" stroke-width="1.2"/><path d="M7.2 7.2 L10 10" stroke="#E09020" stroke-width="1.8"/><path d="M2.7 4.5 H6.3" stroke="#2A60B0" stroke-width="1"/></svg>
<svg style="position:absolute;left:318px;top:40px" width="34" height="6" viewBox="0 0 34 6"><path d="M0 3 H8.5 V5 H11 M11 3 H34" stroke="#505050" stroke-width="1" fill="none"/><path d="M8.5 1 V5.5" stroke="#303030" stroke-width="1.2"/></svg>
<svg style="position:absolute;left:356.5px;top:37.5px" width="11" height="11" viewBox="0 0 11 11"><circle cx="4.5" cy="4.5" r="3.7" fill="#D8ECFF" stroke="#3A7AD0" stroke-width="1.2"/><path d="M7.2 7.2 L10 10" stroke="#E09020" stroke-width="1.8"/><path d="M2.7 4.5 H6.3 M4.5 2.7 V6.3" stroke="#2A60B0" stroke-width="1"/></svg>
<svg style="position:absolute;left:372.5px;top:37.5px" width="11" height="11" viewBox="0 0 11 11"><circle cx="4.5" cy="4.5" r="3.7" fill="#D8ECFF" stroke="#3A7AD0" stroke-width="1.2"/><path d="M7.2 7.2 L10 10" stroke="#E09020" stroke-width="1.8"/><rect x="3" y="3" width="3" height="3" fill="none" stroke="#2A60B0" stroke-width=".8"/></svg>
<svg style="position:absolute;left:387.5px;top:37.5px" width="10" height="11" viewBox="0 0 10 11"><rect x=".5" y=".5" width="9" height="10" fill="#EAF2FC" stroke="#3A6AB0" stroke-width="1"/><rect x=".5" y=".5" width="9" height="1.5" fill="#3A6AB0"/><path d="M2.5 3.5 L4 5 M7.5 3.5 L6 5 M2.5 8.5 L4 7 M7.5 8.5 L6 7" stroke="#E02020" stroke-width="1.3"/></svg>
<svg style="position:absolute;left:404px;top:38px" width="9" height="10" viewBox="0 0 9 10"><path d="M2.5 3 Q7.5 1.5 7.5 5.5 Q7.5 8.5 4 9" stroke="#3A78D8" stroke-width="1.7" fill="none"/><path d="M0 3.2 L3.6 .2 L3.6 6Z" fill="#3A78D8"/></svg>
<svg style="position:absolute;left:422.5px;top:37px" width="11" height="12" viewBox="0 0 11 12"><path d="M5.5 5 V3 Q5.5 .8 7.8 .8 Q10 .8 10 3 V4" stroke="#909090" stroke-width="1.1" fill="none"/><rect x=".5" y="5" width="7.5" height="6.5" fill="#F0A030" stroke="#B06810" stroke-width=".6"/></svg>
<svg style="position:absolute;left:437.5px;top:37.5px" width="11" height="11" viewBox="0 0 11 11"><rect x=".5" y=".5" width="10" height="10" fill="#D6E6FA" stroke="#4274BC" stroke-width="1"/><rect x=".5" y=".5" width="10" height="2" fill="#4A7CC4"/><path d="M3 4.5 L6 7.5 M6 4.5 V7.5 H3" stroke="#2AA040" stroke-width="1.2" fill="none"/></svg>
<svg style="position:absolute;left:452.5px;top:37.5px" width="11" height="11" viewBox="0 0 11 11"><rect x=".5" y=".5" width="10" height="10" fill="#D6E6FA" stroke="#4274BC" stroke-width="1"/><rect x=".5" y=".5" width="10" height="2" fill="#4A7CC4"/><path d="M3 9 L9 3" stroke="#222" stroke-width="1.3"/></svg>
<svg style="position:absolute;left:467.5px;top:37.5px" width="11" height="11" viewBox="0 0 11 11"><rect x=".5" y=".5" width="10" height="10" fill="#D6E6FA" stroke="#4274BC" stroke-width="1"/><rect x=".5" y=".5" width="10" height="2" fill="#4A7CC4"/><path d="M2.5 4.5 H7.5 M2.5 6.5 H7.5 M2.5 8.5 H7.5" stroke="#E04040" stroke-width=".9"/></svg>
<svg style="position:absolute;left:489px;top:37px" width="9" height="12" viewBox="0 0 9 12"><path d="M1.5 6 V11 H8.5 V8.5" stroke="#D8A020" stroke-width="2" fill="none"/><path d="M0 4 L2.5 1 L5 4Z" fill="#3A78D8"/></svg>
<svg style="position:absolute;left:503.5px;top:38.5px" width="9" height="9" viewBox="0 0 9 9"><path d="M.5 4.5 L4.2 .8 V2.8 H8.5 V6.2 H4.2 V8.2Z" fill="#CBE6FF" stroke="#2C7AD6" stroke-width=".9"/></svg>
<svg style="position:absolute;left:518.5px;top:38.5px" width="9" height="9" viewBox="0 0 9 9"><path d="M8.5 4.5 L4.8 .8 V2.8 H.5 V6.2 H4.8 V8.2Z" fill="#C8C8C8" stroke="#A8A8A8" stroke-width=".9"/></svg>
<svg style="position:absolute;left:539px;top:37.5px" width="12" height="11" viewBox="0 0 12 11"><rect x=".5" y=".5" width="11" height="10" fill="#D6E6FA" stroke="#4274BC" stroke-width="1"/><rect x=".5" y=".5" width="11" height="2" fill="#4A7CC4"/><circle cx="5.5" cy="6" r="2.5" fill="#fff" stroke="#3A7AD0" stroke-width="1"/><path d="M7.5 8 L9.5 10" stroke="#E09020" stroke-width="1.2"/></svg>
<svg style="position:absolute;left:554px;top:37.5px" width="11" height="11" viewBox="0 0 11 11"><path d="M1.5 9.5 L6 5" stroke="#E0A020" stroke-width="2.2"/><path d="M6.3 1.8 A2.8 2.8 0 1 0 9.2 4.7 L7.8 4.5 L6.5 3.2Z" fill="#E8B040" stroke="#907020" stroke-width=".5"/></svg>
<svg style="position:absolute;left:574.5px;top:37px" width="11" height="12" viewBox="0 0 11 12"><rect x="3" y="3" width="7.5" height="8" fill="#D6E6FA" stroke="#4274BC"/><rect x=".5" y=".5" width="6.5" height="4.5" fill="#A8D0F0" stroke="#4274BC" stroke-width=".6"/><path d="M2 5 L4 7.5 L6 5" fill="#30A040"/></svg>
<svg style="position:absolute;left:595px;top:37.5px" width="11" height="10" viewBox="0 0 11 10"><g fill="#3A6AC0" stroke="#203C80" stroke-width=".5"><rect x=".5" y="4" width="4" height="5.5" rx="1"/><rect x="6.5" y="4" width="4" height="5.5" rx="1"/><rect x="1.5" y=".5" width="2.5" height="4"/><rect x="7" y=".5" width="2.5" height="4"/></g><rect x="4.5" y="4.5" width="2" height="2" fill="#3A6AC0"/></svg>
<svg style="position:absolute;left:616px;top:37.5px" width="11" height="11" viewBox="0 0 11 11"><rect x=".5" y=".5" width="10" height="10" fill="#D6E6FA" stroke="#4274BC" stroke-width="1"/><rect x=".5" y=".5" width="10" height="2" fill="#4A7CC4"/><rect x="6" y="2" width="4" height="3" fill="#30B040"/></svg>
<svg style="position:absolute;left:631.5px;top:38px" width="10" height="10" viewBox="0 0 10 10"><rect x=".5" y=".5" width="9" height="9" fill="#D6E6FA" stroke="#4274BC"/><path d="M3.5 .5 V9.5 M6.5 .5 V9.5" stroke="#4274BC" stroke-width=".8"/></svg>
<svg style="position:absolute;left:646.5px;top:37.5px" width="10" height="11" viewBox="0 0 10 11"><rect x=".5" y=".5" width="9" height="10" fill="#4A7CC4" stroke="#2A5AA0"/><rect x="2" y="3" width="6" height="6" fill="#D6E6FA"/><path d="M3 6 L7 4" stroke="#2A5AA0" stroke-width="1"/></svg>
<div style="left:211.50px;top:50.50px;width:579.50px;height:250.50px;background:#789CC7"></div>
<div style="left:791.00px;top:50.50px;width:9.00px;height:250.50px;background:linear-gradient(90deg,#F0EEE6,#FCFCFA)"></div>
<div style="left:791.00px;top:51.00px;width:9.00px;height:9.50px;background:linear-gradient(#FFFFFF,#E8E5D8);border:1px solid #B8B4A2;border-radius:1px"></div>
<svg style="position:absolute;left:792.5px;top:54px" width="6" height="4" viewBox="0 0 6 4"><path d="M0 3.5 H6 L3 0 Z" fill="#222"/></svg>
<div style="left:791.30px;top:61.00px;width:8.20px;height:228.30px;background:linear-gradient(90deg,#B4CCF0,#A6C2EE 60%,#B8D0F4);border:1px solid #8AA6D2;border-radius:1px"></div>
<div style="left:211.50px;top:301.00px;width:588.50px;height:9.80px;background:linear-gradient(#F0EEE6,#FCFCFA)"></div>
<div style="left:212.50px;top:301.50px;width:9.00px;height:9.00px;background:linear-gradient(#FFFFFF,#E8E5D8);border:1px solid #B8B4A2;border-radius:1px"></div>
<div style="left:222.00px;top:301.30px;width:550.70px;height:9.30px;background:linear-gradient(#B4CCF0,#A4C0EC 60%,#98B6E4);border:1px solid #8AA6D2;border-radius:1px"></div>
<div style="left:781.70px;top:301.50px;width:8.50px;height:9.00px;background:linear-gradient(#FFFFFF,#E8E5D8);border:1px solid #B8B4A2;border-radius:1px"></div>
<svg style="position:absolute;left:784.5px;top:303.5px" width="4" height="6" viewBox="0 0 4 6"><path d="M0 0 V6 L3.5 3 Z" fill="#222"/></svg>
<div style="left:790.50px;top:301.50px;width:9.00px;height:9.00px;background:linear-gradient(#FFFFFF,#E8E5D8);border:1px solid #B8B4A2;border-radius:1px"></div>
<svg style="position:absolute;left:793px;top:305px" width="5" height="3" viewBox="0 0 6 4"><path d="M0 0 H6 L3 3.5 Z" fill="#111"/></svg>
<svg style="position:absolute;left:215px;top:303.5px" width="4" height="6" viewBox="0 0 4 6"><path d="M4 0 V6 L0.5 3 Z" fill="#222"/></svg>
<div style="left:212.00px;top:312.50px;width:434.00px;height:1.00px;background:repeating-linear-gradient(90deg,#C8C4B4 0 1px,transparent 1px 3.6px)"></div>
<div style="left:209.50px;top:34.00px;width:1.00px;height:300.00px;background:repeating-linear-gradient(#C8C4B4 0 1px,transparent 1px 3px);opacity:.0"></div>
<div style="left:211.5px;top:50.5px;width:579.5px;height:250.5px;overflow:hidden"><div style="left:-211.5px;top:-50.5px;width:800px;height:600px">
<svg style="position:absolute;left:0;top:0" width="800" height="600"><line x1="297" y1="63" x2="417" y2="63" stroke="#1FA63A" stroke-width="1.7"/></svg>
<svg style="position:absolute;left:0;top:0" width="800" height="600"><line x1="291" y1="76" x2="291" y2="125" stroke="#1FA63A" stroke-width="1.7"/></svg>
<svg style="position:absolute;left:0;top:0" width="800" height="600"><line x1="285" y1="65" x2="245" y2="113" stroke="#1FA63A" stroke-width="1.7"/></svg>
<svg style="position:absolute;left:0;top:0" width="800" height="600"><line x1="424" y1="75" x2="424" y2="125" stroke="#1FA63A" stroke-width="1.7"/></svg>
<svg style="position:absolute;left:0;top:0" width="800" height="600"><line x1="431" y1="64" x2="522" y2="85" stroke="#1FA63A" stroke-width="1.7"/></svg>
<svg style="position:absolute;left:0;top:0" width="800" height="600"><line x1="560" y1="143.5" x2="651" y2="143.5" stroke="#1FA63A" stroke-width="1.7"/></svg>
<div style="left:284.50px;top:52.00px;width:15.00px;height:2.00px;background:#22BE4C;opacity:.85"></div>
<div style="left:285.00px;top:55.00px;width:9.60px;height:22.00px;background:#22BE4C;border:1px solid #0B6A22;border-top:2px solid #0A3A12"></div>
<div style="left:294.60px;top:56.00px;width:2.40px;height:21.00px;background:#0B6A22;border-top-right-radius:1px"></div>
<div style="left:286.00px;top:62.33px;width:8.60px;height:1.00px;background:#0B6A22"></div>
<div style="left:286.00px;top:69.67px;width:8.60px;height:1.00px;background:#0B6A22"></div>
<div style="left:287.50px;top:58.00px;width:4.60px;height:2.33px;border:1px dotted rgba(10,80,30,.45)"></div>
<div style="left:287.50px;top:65.33px;width:4.60px;height:2.33px;border:1px dotted rgba(10,80,30,.45)"></div>
<div style="left:287.50px;top:72.67px;width:4.60px;height:2.33px;border:1px dotted rgba(10,80,30,.45)"></div>
<div style="left:416.50px;top:51.00px;width:14.00px;height:2.00px;background:#22BE4C;opacity:.85"></div>
<div style="left:417.00px;top:54.00px;width:8.80px;height:21.00px;background:#22BE4C;border:1px solid #0B6A22;border-top:2px solid #0A3A12"></div>
<div style="left:425.80px;top:55.00px;width:2.20px;height:20.00px;background:#0B6A22;border-top-right-radius:1px"></div>
<div style="left:418.00px;top:61.00px;width:7.80px;height:1.00px;background:#0B6A22"></div>
<div style="left:418.00px;top:68.00px;width:7.80px;height:1.00px;background:#0B6A22"></div>
<div style="left:419.50px;top:57.00px;width:3.80px;height:2.00px;border:1px dotted rgba(10,80,30,.45)"></div>
<div style="left:419.50px;top:64.00px;width:3.80px;height:2.00px;border:1px dotted rgba(10,80,30,.45)"></div>
<div style="left:419.50px;top:71.00px;width:3.80px;height:2.00px;border:1px dotted rgba(10,80,30,.45)"></div>
<div style="left:231.50px;top:103.00px;width:16.00px;height:2.00px;background:#22BE4C;opacity:.85"></div>
<div style="left:232.00px;top:106.00px;width:10.40px;height:18.00px;background:#22BE4C;border:1px solid #0B6A22;border-top:2px solid #0A3A12"></div>
<div style="left:242.40px;top:107.00px;width:2.60px;height:17.00px;background:#0B6A22;border-top-right-radius:1px"></div>
<div style="left:233.00px;top:115.00px;width:9.40px;height:1.00px;background:#0B6A22"></div>
<div style="left:234.50px;top:109.00px;width:5.40px;height:4.00px;border:1px dotted rgba(10,80,30,.45)"></div>
<div style="left:234.50px;top:118.00px;width:5.40px;height:4.00px;border:1px dotted rgba(10,80,30,.45)"></div>
<div style="left:522.00px;top:70.10px;width:20.90px;height:27.60px;border:2px solid #fff"></div>
<div style="left:525.50px;top:73.00px;width:14.00px;height:2.00px;background:#22BE4C;opacity:.85"></div>
<div style="left:526.00px;top:76.00px;width:8.80px;height:18.00px;background:#22BE4C;border:1px solid #0B6A22;border-top:2px solid #0A3A12"></div>
<div style="left:534.80px;top:77.00px;width:2.20px;height:17.00px;background:#0B6A22;border-top-right-radius:1px"></div>
<div style="left:527.00px;top:82.00px;width:7.80px;height:1.00px;background:#0B6A22"></div>
<div style="left:527.00px;top:88.00px;width:7.80px;height:1.00px;background:#0B6A22"></div>
<div style="left:528.50px;top:79.00px;width:3.80px;height:1.00px;border:1px dotted rgba(10,80,30,.45)"></div>
<div style="left:528.50px;top:85.00px;width:3.80px;height:1.00px;border:1px dotted rgba(10,80,30,.45)"></div>
<div style="left:528.50px;top:91.00px;width:3.80px;height:1.00px;border:1px dotted rgba(10,80,30,.45)"></div>
<div style="left:578.10px;top:130.50px;width:15.80px;height:24.50px;border:1.5px solid #E02838"></div>
<div style="left:580.00px;top:134.00px;width:9.20px;height:19.00px;background:#F0EE60;border:1px solid #8C8A28;border-top:2px solid #0A3A12"></div>
<div style="left:589.20px;top:135.00px;width:2.30px;height:18.00px;background:#8C8A28;border-top-right-radius:1px"></div>
<div style="left:581.00px;top:140.33px;width:8.20px;height:1.00px;background:#8C8A28"></div>
<div style="left:581.00px;top:146.67px;width:8.20px;height:1.00px;background:#8C8A28"></div>
<div style="left:582.50px;top:137.00px;width:4.20px;height:1.33px;border:1px dotted rgba(10,80,30,.45)"></div>
<div style="left:582.50px;top:143.33px;width:4.20px;height:1.33px;border:1px dotted rgba(10,80,30,.45)"></div>
<div style="left:582.50px;top:149.67px;width:4.20px;height:1.33px;border:1px dotted rgba(10,80,30,.45)"></div>
<div style="left:648.70px;top:132.30px;width:19.80px;height:21.00px;border:1.5px solid #E8A040;border-radius:1px"></div>
<div style="left:650.50px;top:134.00px;width:18.00px;height:2.00px;background:#22BE4C;opacity:.85"></div>
<div style="left:651.00px;top:137.00px;width:12.00px;height:14.00px;background:#22BE4C;border:1px solid #0B6A22;border-top:2px solid #0A3A12"></div>
<div style="left:663.00px;top:138.00px;width:3.00px;height:13.00px;background:#0B6A22;border-top-right-radius:1px"></div>
<div style="left:653.50px;top:140.00px;width:7.00px;height:9.00px;border:1px dotted rgba(10,80,30,.45)"></div>
<div class="t" style="left:252.80px;top:77.50px;font-size:8.5px;color:#101010;font-family:'Liberation Mono',monospace;letter-spacing:-1.2px"><i style="width:7.2px;font-size:8.5px;font-family:Liberation Sans;font-weight:bold">阳</i><i style="width:7.2px;font-size:8.5px;font-family:Liberation Sans;font-weight:bold">泉</i><i style="width:7.2px;font-size:8.5px;font-family:Liberation Sans;font-weight:bold">开</i><i style="width:7.2px;font-size:8.5px;font-family:Liberation Sans;font-weight:bold">发</i><i style="width:7.2px;font-size:8.5px;font-family:Liberation Sans;font-weight:bold">区</i>LTE<i style="width:7.2px;font-size:8.5px;font-family:Liberation Sans;font-weight:bold">对</i><i style="width:7.2px;font-size:8.5px;font-family:Liberation Sans;font-weight:bold">接</i>-32PTN</div>
<div class="t" style="left:385.00px;top:77.50px;font-size:8.5px;color:#101010;font-family:'Liberation Mono',monospace;letter-spacing:-1.2px"><i style="width:7.2px;font-size:8.5px;font-family:Liberation Sans;font-weight:bold">阳</i><i style="width:7.2px;font-size:8.5px;font-family:Liberation Sans;font-weight:bold">泉</i><i style="width:7.2px;font-size:8.5px;font-family:Liberation Sans;font-weight:bold">新</i><i style="width:7.2px;font-size:8.5px;font-family:Liberation Sans;font-weight:bold">大</i><i style="width:7.2px;font-size:8.5px;font-family:Liberation Sans;font-weight:bold">楼</i>LTE<i style="width:7.2px;font-size:8.5px;font-family:Liberation Sans;font-weight:bold">对</i><i style="width:7.2px;font-size:8.5px;font-family:Liberation Sans;font-weight:bold">接</i>-32PTN</div>
<div class="t" style="left:497.00px;top:95.50px;font-size:8.5px;color:#101010;font-family:'Liberation Mono',monospace;letter-spacing:-1.2px"><i style="width:7.2px;font-size:8.5px;font-family:Liberation Sans;font-weight:bold">阳</i><i style="width:7.2px;font-size:8.5px;font-family:Liberation Sans;font-weight:bold">泉</i><i style="width:7.2px;font-size:8.5px;font-family:Liberation Sans;font-weight:bold">新</i><i style="width:7.2px;font-size:8.5px;font-family:Liberation Sans;font-weight:bold">大</i><i style="width:7.2px;font-size:8.5px;font-family:Liberation Sans;font-weight:bold">楼</i>6500-16L-5P</div>
<div class="t" style="left:530.00px;top:104.50px;font-size:8.5px;color:#101010;font-family:'Liberation Mono',monospace;letter-spacing:-1.2px">TN</div>
<div class="t" style="left:568.00px;top:154.00px;font-size:8.5px;color:#101010;font-family:'Liberation Mono',monospace;letter-spacing:-1.2px"><i style="width:7.2px;font-size:8.5px;font-family:Liberation Sans;font-weight:bold">阳</i><i style="width:7.2px;font-size:8.5px;font-family:Liberation Sans;font-weight:bold">泉</i><i style="width:7.2px;font-size:8.5px;font-family:Liberation Sans;font-weight:bold">新</i><i style="width:7.2px;font-size:8.5px;font-family:Liberation Sans;font-weight:bold">大</i><i style="width:7.2px;font-size:8.5px;font-family:Liberation Sans;font-weight:bold">楼</i>1</div>
<div class="t" style="left:627.00px;top:153.00px;font-size:8.5px;color:#101010;font-family:'Liberation Mono',monospace;letter-spacing:-1.2px"><i style="width:7.2px;font-size:8.5px;font-family:Liberation Sans;font-weight:bold">阳</i><i style="width:7.2px;font-size:8.5px;font-family:Liberation Sans;font-weight:bold">泉</i><i style="width:7.2px;font-size:8.5px;font-family:Liberation Sans;font-weight:bold">市</i><i style="width:7.2px;font-size:8.5px;font-family:Liberation Sans;font-weight:bold">政</i><i style="width:7.2px;font-size:8.5px;font-family:Liberation Sans;font-weight:bold">府</i>6500-8PTN</div>
<div class="t" style="left:204.00px;top:124.20px;font-size:8.5px;color:#101010;font-family:'Liberation Mono',monospace;letter-spacing:-1.2px"><i style="width:7.2px;font-size:8.5px;font-family:Liberation Sans;font-weight:bold">阳</i><i style="width:7.2px;font-size:8.5px;font-family:Liberation Sans;font-weight:bold">泉</i><i style="width:7.2px;font-size:8.5px;font-family:Liberation Sans;font-weight:bold">开</i><i style="width:7.2px;font-size:8.5px;font-family:Liberation Sans;font-weight:bold">发</i><i style="width:7.2px;font-size:8.5px;font-family:Liberation Sans;font-weight:bold">区</i>6500-16L-3PTN</div>
<div class="t" style="left:211.00px;top:182.50px;font-size:8.5px;color:#101010;font-family:'Liberation Mono',monospace;letter-spacing:-1.2px"><i style="width:7.2px;font-size:8.5px;font-family:Liberation Sans;font-weight:bold">阳</i><i style="width:7.2px;font-size:8.5px;font-family:Liberation Sans;font-weight:bold">泉</i><i style="width:7.2px;font-size:8.5px;font-family:Liberation Sans;font-weight:bold">市</i><i style="width:7.2px;font-size:8.5px;font-family:Liberation Sans;font-weight:bold">政</i><i style="width:7.2px;font-size:8.5px;font-family:Liberation Sans;font-weight:bold">府</i></div>
<div class="t" style="left:209.00px;top:223.90px;font-size:8.5px;color:#101010;font-family:'Liberation Mono',monospace;letter-spacing:-1.2px"><i style="width:7.2px;font-size:8.5px;font-family:Liberation Sans;font-weight:bold">阳</i><i style="width:7.2px;font-size:8.5px;font-family:Liberation Sans;font-weight:bold">泉</i><i style="width:7.2px;font-size:8.5px;font-family:Liberation Sans;font-weight:bold">西</i><i style="width:7.2px;font-size:8.5px;font-family:Liberation Sans;font-weight:bold">关</i></div>
</div></div>
<div style="left:217.00px;top:318.00px;width:8.00px;height:9.00px;background:linear-gradient(#FF6A5A,#D01810);border:1px solid #A01008;border-radius:1px"></div>
<svg style="position:absolute;left:217px;top:318px" width="8" height="9" viewBox="0 0 10 10"><path d="M3 3 L7 7 M7 3 L3 7" stroke="#fff" stroke-width="1.5"/></svg>
<div class="t" style="right:3.00px;top:319.00px;font-size:8px;color:#111;"><i style="width:7.5px;font-size:9px">共</i> 2 <i style="width:7.5px;font-size:9px">条</i><i style="width:7.5px;font-size:9px">记</i><i style="width:7.5px;font-size:9px">录</i></div>
<div style="left:212.00px;top:331.00px;width:588.00px;height:100.50px;background:#fff;border:1px solid #A6A291"></div>
<div style="left:213.00px;top:332.00px;width:587.00px;height:12.00px;background:linear-gradient(#FFFFFF,#F3F1E9 60%,#E4E0D0);border-right:1px solid #D0CCBC;border-bottom:1px solid #C8C4B2"></div>
<div style="left:213.00px;top:332.00px;width:432.50px;height:12.00px;background:linear-gradient(#FFFFFF,#F3F1E9 60%,#E4E0D0);border-right:1px solid #D0CCBC;border-bottom:1px solid #C8C4B2"></div>
<div class="t" style="left:216.00px;top:334.50px;font-size:8px;color:#111;"><i style="width:7.5px;font-size:9px">行</i></div>
<div style="left:645.00px;top:332.00px;width:44.00px;height:13.00px;background:linear-gradient(#FFFFFF,#F3F1E9 60%,#E4E0D0);border-right:1px solid #D0CCBC;border-bottom:1px solid #C8C4B2"></div>
<div class="t" style="left:648.00px;top:334.50px;font-size:8px;color:#111;"><i style="width:7.5px;font-size:9px">状</i><i style="width:7.5px;font-size:9px">态</i></div>
<div style="left:689.00px;top:332.00px;width:75.00px;height:13.00px;background:linear-gradient(#FFFFFF,#F3F1E9 60%,#E4E0D0);border-right:1px solid #D0CCBC;border-bottom:1px solid #C8C4B2"></div>
<div class="t" style="left:692.00px;top:334.50px;font-size:8px;color:#111;">IP<i style="width:7.5px;font-size:9px">地</i><i style="width:7.5px;font-size:9px">址</i></div>
<div style="left:764.00px;top:332.00px;width:36.00px;height:13.00px;background:#F1EEE3"></div>
<div style="left:213.00px;top:345.00px;width:551.00px;height:14.00px;border-bottom:1px solid #D9D5C6"></div>
<div style="left:213.00px;top:359.00px;width:551.00px;height:14.00px;background:#F3F0E6;border-bottom:1px solid #D9D5C6"></div>
<div style="left:213.00px;top:345.00px;width:20.00px;height:14.00px;background:linear-gradient(#FFFFFF,#F3F1E9 60%,#E4E0D0);border-right:1px solid #D0CCBC;border-bottom:1px solid #C8C4B2"></div>
<div style="left:213.00px;top:359.00px;width:20.00px;height:14.00px;background:linear-gradient(#FFFFFF,#F3F1E9 60%,#E4E0D0);border-right:1px solid #D0CCBC;border-bottom:1px solid #C8C4B2"></div>
<div class="t" style="left:222.00px;top:348.00px;font-size:8px;color:#111;">1</div>
<div class="t" style="left:222.00px;top:362.00px;font-size:8px;color:#111;">2</div>
<div style="left:645.00px;top:345.00px;width:1.00px;height:28.00px;background:#D9D5C6"></div>
<div style="left:689.00px;top:345.00px;width:1.00px;height:28.00px;background:#D9D5C6"></div>
<div style="left:764.00px;top:345.00px;width:1.00px;height:28.00px;background:#D9D5C6"></div>
<div class="t" style="left:690.50px;top:348.00px;font-size:8px;color:#222;">172.49.16.8</div>
<div class="t" style="left:690.50px;top:362.00px;font-size:8px;color:#222;">172.49.60.65</div>
<div style="left:212.00px;top:433.50px;width:378.00px;height:1.00px;background:repeating-linear-gradient(90deg,#C8C4B4 0 1px,transparent 1px 3.6px)"></div>
<div style="left:59.50px;top:437.00px;width:740.50px;height:143.00px;background:#F5F1E5;border:1px solid #E3C77A"></div>
<div style="left:61.00px;top:438.00px;width:738.00px;height:17.00px;background:linear-gradient(#F8F6EE,#EFECE0)"></div>
<svg style="position:absolute;left:65.5px;top:440px" width="11" height="12" viewBox="0 0 11 12"><rect x=".5" y=".5" width="10" height="11" fill="#5A8AD0" stroke="#2A5AA0"/><rect x="2" y="2.5" width="7" height="7.5" fill="#E0ECFA"/><path d="M3 4.5 H8 M3 6.5 H8 M3 8.5 H6" stroke="#2A5AA0" stroke-width=".8"/><circle cx="3.5" cy="8" r="1.3" fill="#30A040"/></svg>
<svg style="position:absolute;left:82px;top:445px" width="5" height="3" viewBox="0 0 5 3"><path d="M0 0 H5 L2.5 2.8Z" fill="#111"/></svg>
<svg style="position:absolute;left:88.5px;top:440.5px" width="11" height="11" viewBox="0 0 11 11"><rect x="2" y=".5" width="7" height="5" fill="#fff" stroke="#6A8AB0" stroke-width=".7"/><rect x=".5" y="4.5" width="10" height="5.5" rx="2" fill="#A8CCF0" stroke="#4A7AB8" stroke-width=".8"/></svg>
<div style="left:105.00px;top:439.00px;width:1.00px;height:13.00px;background:#CDC9B9"></div>
<svg style="position:absolute;left:112px;top:440px" width="11" height="12" viewBox="0 0 11 12"><rect x="1" y="4.5" width="8.5" height="7" fill="#4A8AD8" stroke="#2A5AA0" stroke-width=".6"/><rect x="2.5" y="6.5" width="5" height="3" fill="#D8ECFA"/><path d="M5 6 L10 1" stroke="#E0A020" stroke-width="1.8"/></svg>
<div style="left:125.00px;top:439.00px;width:1.00px;height:13.00px;background:#CDC9B9"></div>
<svg style="position:absolute;left:130px;top:440.5px" width="11" height="11" viewBox="0 0 11 11"><path d="M1.5 9.5 L6 5" stroke="#E0A020" stroke-width="2.2"/><path d="M6.3 1.8 A2.8 2.8 0 1 0 9.2 4.7 L7.8 4.5 L6.5 3.2Z" fill="#E8B040" stroke="#907020" stroke-width=".5"/></svg>
<svg style="position:absolute;left:145px;top:440px" width="11" height="12" viewBox="0 0 11 12"><rect x=".5" y="1" width="10" height="10.5" rx="1" fill="#5A9AE8" stroke="#2A60B0" stroke-width=".6"/><rect x=".5" y=".5" width="10" height="2.5" fill="#E04040"/><path d="M3 7 A2.5 2.5 0 0 1 8 6 M8 7.5 A2.5 2.5 0 0 1 3 8.5" stroke="#fff" stroke-width="1" fill="none"/></svg>
<div class="t" style="left:157.00px;top:442.00px;font-size:8px;color:#111;"><i style="width:7.5px;font-size:9px">告</i><i style="width:7.5px;font-size:9px">警</i><i style="width:7.5px;font-size:9px">级</i><i style="width:7.5px;font-size:9px">别</i>:</div>
<div style="left:192.00px;top:440.00px;width:35.00px;height:13.00px;background:#fff;border:1px solid #A6A291"></div>
<div style="left:221.50px;top:441.00px;width:6.00px;height:11.00px;background:linear-gradient(#FDFDFB,#E6E2D4);border:1px solid #C8C4B4"></div>
<div class="t" style="left:194.00px;top:442.50px;font-size:8px;color:#111;"><i style="width:7.5px;font-size:9px">所</i><i style="width:7.5px;font-size:9px">有</i></div>
<div class="t" style="right:7.00px;top:442.50px;font-size:8px;color:#111;"><i style="width:7.5px;font-size:9px">总</i><i style="width:7.5px;font-size:9px">数</i>:0 <i style="width:7.5px;font-size:9px">严</i><i style="width:7.5px;font-size:9px">重</i>:0 <i style="width:7.5px;font-size:9px">主</i><i style="width:7.5px;font-size:9px">要</i>:0 <i style="width:7.5px;font-size:9px">次</i><i style="width:7.5px;font-size:9px">要</i>:0 <i style="width:7.5px;font-size:9px">警</i><i style="width:7.5px;font-size:9px">告</i>:0</div>
<div style="left:62.00px;top:455.50px;width:736.50px;height:123.00px;background:#fff;border:1px solid #9A9686"></div>
<div style="left:63.00px;top:456.50px;width:734.50px;height:14.00px;background:linear-gradient(#FFFFFF,#F3F1E9 60%,#E4E0D0);border-bottom:1px solid #C8C4B2"></div>
<div style="left:63.00px;top:456.50px;width:21.00px;height:14.00px;border-right:1px solid #CFCBBB"></div>
<div class="t" style="left:64.00px;top:459.00px;font-size:8px;color:#111;"><i style="width:7.5px;font-size:9px">行</i><i style="width:7.5px;font-size:9px">号</i></div>
<div style="left:84.00px;top:456.50px;width:13.00px;height:14.00px;border-right:1px solid #CFCBBB"></div>
<div class="t" style="left:85.00px;top:459.00px;font-size:8px;color:#111;">...</div>
<div style="left:97.00px;top:456.50px;width:74.00px;height:14.00px;border-right:1px solid #CFCBBB"></div>
<div class="t" style="left:98.00px;top:459.00px;font-size:8px;color:#111;"><i style="width:7.5px;font-size:9px">确</i><i style="width:7.5px;font-size:9px">认</i><i style="width:7.5px;font-size:9px">状</i><i style="width:7.5px;font-size:9px">态</i></div>
<div style="left:171.00px;top:456.50px;width:50.00px;height:14.00px;border-right:1px solid #CFCBBB"></div>
<div class="t" style="left:172.00px;top:459.00px;font-size:8px;color:#111;"><i style="width:7.5px;font-size:9px">告</i><i style="width:7.5px;font-size:9px">警</i><i style="width:7.5px;font-size:9px">级</i><i style="width:7.5px;font-size:9px">别</i></div>
<div style="left:221.00px;top:456.50px;width:416.00px;height:14.00px;border-right:1px solid #CFCBBB"></div>
<div class="t" style="left:222.00px;top:459.00px;font-size:8px;color:#111;"></div>
<div style="left:637.00px;top:456.50px;width:153.00px;height:14.00px;border-right:1px solid #CFCBBB"></div>
<div class="t" style="left:638.00px;top:459.00px;font-size:8px;color:#111;"><i style="width:7.5px;font-size:9px">告</i><i style="width:7.5px;font-size:9px">警</i><i style="width:7.5px;font-size:9px">码</i></div>
<div style="left:63.00px;top:567.50px;width:734.50px;height:10.00px;background:linear-gradient(#F9F8F3,#ECE9DE)"></div>
<div style="left:788.00px;top:568.00px;width:9.00px;height:9.00px;background:linear-gradient(#FFFFFF,#E8E5D8);border:1px solid #B8B4A2;border-radius:1px"></div>
<svg style="position:absolute;left:791px;top:570px" width="4" height="6" viewBox="0 0 4 6"><path d="M0 0 V6 L3.5 3 Z" fill="#333"/></svg>
<div style="left:1.50px;top:438.30px;width:58.50px;height:13.70px;background:linear-gradient(#FDE6A4,#F9DE94);border:1px solid #E8CC78;border-right:none;clip-path:polygon(3px 0,100% 0,100% 100%,0 100%,0 3px)"></div>
<div class="t" style="left:6.00px;top:441.50px;font-size:8px;color:#222;"><i style="width:7.5px;font-size:9px">网</i><i style="width:7.5px;font-size:9px">元</i><i style="width:7.5px;font-size:9px">监</i><i style="width:7.5px;font-size:9px">控</i><i style="width:7.5px;font-size:9px">告</i><i style="width:7.5px;font-size:9px">警</i></div>
<div style="left:1.50px;top:452.00px;width:58.50px;height:13.50px;background:#F6F2E4;border:1px solid #E8D494;border-top:none;border-right:none"></div>
<div class="t" style="left:6.00px;top:455.00px;font-size:8px;color:#222;"><i style="width:7.5px;font-size:9px">网</i><i style="width:7.5px;font-size:9px">元</i><i style="width:7.5px;font-size:9px">性</i><i style="width:7.5px;font-size:9px">能</i><i style="width:7.5px;font-size:9px">监</i><i style="width:7.5px;font-size:9px">控</i></div>
<div style="left:0.00px;top:580.00px;width:800.00px;height:15.00px;background:#F5F1E5"></div>
<div style="left:623.00px;top:582.00px;width:1.00px;height:11.00px;background:#C9C5B5;box-shadow:1px 0 0 #fff"></div>
<div style="left:0.00px;top:580.00px;width:800.00px;height:1.00px;background:#DCD8C8"></div>
<svg style="position:absolute;left:3.5px;top:582px" width="9" height="9" viewBox="0 0 9 9"><rect x=".8" y=".5" width="5" height="3.5" rx="1" fill="#6AA8F0" stroke="#3A78C8" stroke-width=".5"/><path d="M3.3 4 V7 H6" stroke="#888" stroke-width=".6" fill="none"/><circle cx="3.3" cy="4.5" r=".7" fill="#E0A020"/><rect x="5.8" y="4.5" width="3" height="4" rx="1" fill="#5A98E0"/></svg>
<div style="left:11.00px;top:526.30px;width:509.50px;height:80.00px;background:linear-gradient(#C6D2E0,#D6E4F2 18px,#D2E2F2);border:1px solid #6A7280;border-radius:5px 5px 0 0;box-shadow:inset 1px 1px 0 rgba(255,255,255,.5)"></div>
<div style="left:17.00px;top:532.70px;width:10.00px;height:10.00px;background:linear-gradient(90deg,#2038C0,#A0C0FA 50%,#2038C0)"></div>
<div class="t" style="left:30.00px;top:533.50px;font-size:8px;color:#6A6A6A;"><i style="width:7.5px;font-size:9px">网</i><i style="width:7.5px;font-size:9px">元</i><i style="width:7.5px;font-size:9px">不</i><i style="width:7.5px;font-size:9px">同</i><i style="width:7.5px;font-size:9px">步</i><i style="width:7.5px;font-size:9px">信</i><i style="width:7.5px;font-size:9px">息</i></div>
<div style="left:16.00px;top:545.00px;width:499.00px;height:60.00px;background:#F5F1E5"></div>
<div style="left:16.00px;top:545.00px;width:499.00px;height:1.00px;background:#E8EEF4"></div>
<div style="left:24.00px;top:558.70px;width:482.00px;height:50.00px;border:1px solid #D0CCBC;border-radius:3px"></div>
<div style="left:27.00px;top:554.00px;width:56.00px;height:9.00px;background:#F5F1E5"></div>
<div class="t" style="left:28.00px;top:554.30px;font-size:8px;color:#111;"><i style="width:7.5px;font-size:9px">网</i><i style="width:7.5px;font-size:9px">元</i><i style="width:7.5px;font-size:9px">不</i><i style="width:7.5px;font-size:9px">同</i><i style="width:7.5px;font-size:9px">步</i><i style="width:7.5px;font-size:9px">信</i><i style="width:7.5px;font-size:9px">息</i></div>
<div style="left:35.00px;top:574.50px;width:460.00px;height:30.00px;background:#fff;border:1px solid #A6A291"></div>
<div style="left:36.00px;top:575.50px;width:30.00px;height:12.00px;background:linear-gradient(#FFFFFF,#F3F1E9 60%,#E4E0D0);border-right:1px solid #D0CCBC;border-bottom:1px solid #C8C4B2"></div>
<div class="t" style="left:36.00px;width:30.00px;text-align:center;top:577.50px;font-size:8px;color:#111;"><i style="width:7.5px;font-size:9px">行</i><i style="width:7.5px;font-size:9px">号</i></div>
<div style="left:66.00px;top:575.50px;width:141.00px;height:12.00px;background:linear-gradient(#FFFFFF,#F3F1E9 60%,#E4E0D0);border-right:1px solid #D0CCBC;border-bottom:1px solid #C8C4B2"></div>
<div class="t" style="left:66.00px;width:141.00px;text-align:center;top:577.50px;font-size:8px;color:#111;"><i style="width:7.5px;font-size:9px">网</i><i style="width:7.5px;font-size:9px">元</i></div>
<div style="left:207.00px;top:575.50px;width:140.00px;height:12.00px;background:linear-gradient(#FFFFFF,#F3F1E9 60%,#E4E0D0);border-right:1px solid #D0CCBC;border-bottom:1px solid #C8C4B2"></div>
<div class="t" style="left:207.00px;width:140.00px;text-align:center;top:577.50px;font-size:8px;color:#111;"><i style="width:7.5px;font-size:9px">同</i><i style="width:7.5px;font-size:9px">步</i><i style="width:7.5px;font-size:9px">状</i><i style="width:7.5px;font-size:9px">态</i></div>
<div style="left:347.00px;top:575.50px;width:139.00px;height:12.00px;background:linear-gradient(#FFFFFF,#F3F1E9 60%,#E4E0D0);border-right:1px solid #D0CCBC;border-bottom:1px solid #C8C4B2"></div>
<div class="t" style="left:347.00px;width:139.00px;text-align:center;top:577.50px;font-size:8px;color:#111;"><i style="width:7.5px;font-size:9px">自</i><i style="width:7.5px;font-size:9px">动</i><i style="width:7.5px;font-size:9px">上</i><i style="width:7.5px;font-size:9px">载</i><i style="width:7.5px;font-size:9px">策</i><i style="width:7.5px;font-size:9px">略</i><i style="width:7.5px;font-size:9px">状</i><i style="width:7.5px;font-size:9px">态</i></div>
<div style="left:36.00px;top:587.50px;width:30.00px;height:10.00px;background:linear-gradient(#FFFFFF,#F3F1E9 60%,#E4E0D0);border-right:1px solid #D0CCBC;border-bottom:1px solid #C8C4B2"></div>
<div class="t" style="left:36.00px;width:30.00px;text-align:center;top:588.00px;font-size:8px;color:#111;">6</div>
<div class="t" style="left:68.00px;top:588.00px;font-size:8px;color:#111;"><i style="width:7.5px;font-size:9px">阳</i><i style="width:7.5px;font-size:9px">泉</i><i style="width:7.5px;font-size:9px">庙</i><i style="width:7.5px;font-size:9px">大</i><i style="width:7.5px;font-size:9px">一</i><i style="width:7.5px;font-size:9px">汽</i><i style="width:7.5px;font-size:9px">大</i><i style="width:7.5px;font-size:9px">众</i>4S<i style="width:7.5px;font-size:9px">店</i>PTN</div>
<div class="t" style="left:208.00px;top:588.00px;font-size:8px;color:#111;"><i style="width:7.5px;font-size:9px">未</i><i style="width:7.5px;font-size:9px">同</i><i style="width:7.5px;font-size:9px">步</i></div>
<div class="t" style="left:348.00px;top:588.00px;font-size:8px;color:#111;"><i style="width:7.5px;font-size:9px">挂</i><i style="width:7.5px;font-size:9px">起</i></div>
<div style="left:486.00px;top:575.50px;width:9.00px;height:12.00px;background:linear-gradient(#FBFAF6,#ECE9DE)"></div>
<div style="left:486.00px;top:587.50px;width:9.00px;height:20.00px;background:linear-gradient(90deg,#EEEBE0,#FBFAF7)"></div>
<div style="left:486.30px;top:587.50px;width:8.50px;height:8.50px;background:linear-gradient(#FFFFFF,#E8E5D8);border:1px solid #B8B4A2;border-radius:1px"></div>
<svg style="position:absolute;left:488px;top:590.2px" width="5" height="3.5" viewBox="0 0 5 3.5"><path d="M0 3.2 H5 L2.5 0 Z" fill="#222"/></svg>
<div style="left:0.00px;top:595.00px;width:800.00px;height:5.00px;background:linear-gradient(#5A6A80 0 .8px,#8494AC .8px,#708098)"></div>
<div style="left:8.00px;top:596.00px;width:18.00px;height:4.00px;border:1px solid #B8C8DC;border-bottom:none;border-radius:9px 9px 0 0;background:#8A9CB4"></div>
<div style="left:63.00px;top:596.50px;width:9.00px;height:3.50px;background:#E0B040;border-radius:3px 3px 0 0"></div>
<div style="left:86.00px;top:596.50px;width:22.00px;height:3.50px;background:#3A8AE0;border-radius:2px 2px 0 0"></div>
<div style="left:112.00px;top:595.50px;width:28.00px;height:4.50px;background:linear-gradient(#D4DCE8,#B8C4D4);border-radius:2px 2px 0 0"></div>
<div style="left:142.00px;top:595.50px;width:32.00px;height:4.50px;background:linear-gradient(#D4DCE8,#B8C4D4);border-radius:2px 2px 0 0"></div>
<div style="left:176.00px;top:595.50px;width:29.00px;height:4.50px;background:linear-gradient(#D4DCE8,#B8C4D4);border-radius:2px 2px 0 0"></div>
<div style="left:207.00px;top:595.50px;width:58.00px;height:4.50px;background:linear-gradient(#D4DCE8,#B8C4D4);border-radius:2px 2px 0 0"></div>
<div style="left:268.00px;top:595.50px;width:32.00px;height:4.50px;background:linear-gradient(#D4DCE8,#B8C4D4);border-radius:2px 2px 0 0"></div>
<div style="left:303.00px;top:595.50px;width:32.00px;height:4.50px;background:linear-gradient(#D4DCE8,#B8C4D4);border-radius:2px 2px 0 0"></div>
<div style="left:337.00px;top:595.50px;width:29.00px;height:4.50px;background:linear-gradient(#D4DCE8,#B8C4D4);border-radius:2px 2px 0 0"></div>
<div style="left:369.00px;top:595.50px;width:29.00px;height:4.50px;background:linear-gradient(#D4DCE8,#B8C4D4);border-radius:2px 2px 0 0"></div>
<div style="left:400.00px;top:595.50px;width:32.00px;height:4.50px;background:linear-gradient(#C0CCE0,#2C48A8);border-radius:2px 2px 0 0"></div>
<div style="left:434.00px;top:595.50px;width:31.00px;height:4.50px;background:linear-gradient(#C0CCE0,#2C48A8);border-radius:2px 2px 0 0"></div>
<div style="left:467.00px;top:595.50px;width:30.00px;height:4.50px;background:linear-gradient(#C0CCE0,#2C48A8);border-radius:2px 2px 0 0"></div>
<div style="left:499.00px;top:595.50px;width:21.00px;height:4.50px;background:linear-gradient(#C0CCE0,#2C48A8);border-radius:2px 2px 0 0"></div>
<div style="left:532.00px;top:595.00px;width:238.00px;height:5.00px;background:linear-gradient(#8494B0,#7080A0)"></div>
<div style="left:770.00px;top:595.00px;width:30.00px;height:5.00px;background:#6A7A92"></div>
<div style="left:224.00px;top:122.50px;width:343.00px;height:450.50px;background:linear-gradient(#CCDDF1,#BCD2EC 18px,#BFD5EE);border:1px solid #56667A;border-radius:6px 6px 0 0;box-shadow:inset -1px -1px 0 #3AA2C4,inset 1px 1px 0 rgba(255,255,255,.5)"></div>
<div style="left:230.00px;top:129.00px;width:10.00px;height:10.00px;background:linear-gradient(90deg,#2038C0,#A0C0FA 50%,#2038C0)"></div>
<div class="t" style="left:243.00px;top:130.00px;font-size:8px;color:#333;"><i style="width:7.5px;font-size:9px">网</i><i style="width:7.5px;font-size:9px">元</i><i style="width:7.5px;font-size:9px">属</i><i style="width:7.5px;font-size:9px">性</i></div>
<div style="left:541.00px;top:128.50px;width:19.50px;height:11.00px;background:linear-gradient(#EAB0A4,#D87A6A 45%,#C85440 55%,#D8806E);border:1px solid #9A5A4E;border-radius:2px"></div>
<svg style="position:absolute;left:546px;top:130px" width="10" height="8" viewBox="0 0 10 8"><path d="M2.5 1.2 L7.5 6.8 M7.5 1.2 L2.5 6.8" stroke="#fff" stroke-width="1.7"/></svg>
<div style="left:229.00px;top:141.00px;width:332.00px;height:426.30px;background:#F5F1E5"></div>
<div style="left:237.50px;top:149.00px;width:316.00px;height:388.50px;border:1px solid #DAD6C8;border-right-color:#B0AC9C;border-bottom-color:#B0AC9C;box-shadow:inset 1px 1px 0 #fff"></div>
<div style="left:242.00px;top:154.70px;width:306.50px;height:359.80px;background:#fff;border:1px solid #8E8A7A"></div>
<div style="left:243.00px;top:155.70px;width:119.00px;height:10.80px;background:linear-gradient(#FFFFFF,#F3F1E9 60%,#E4E0D0);border-right:1px solid #D0CCBC;border-bottom:1px solid #C8C4B2;border-bottom:1.5px solid #B4B0A0"></div>
<div class="t" style="left:243.00px;width:119.00px;text-align:center;top:157.30px;font-size:8px;color:#000;"><i style="width:7.5px;font-size:9px">属</i><i style="width:7.5px;font-size:9px">性</i><i style="width:7.5px;font-size:9px">名</i><i style="width:7.5px;font-size:9px">字</i></div>
<div style="left:362.00px;top:155.70px;width:176.50px;height:10.80px;background:linear-gradient(#FFFFFF,#F3F1E9 60%,#E4E0D0);border-right:1px solid #D0CCBC;border-bottom:1px solid #C8C4B2;border-bottom:1.5px solid #B4B0A0"></div>
<div class="t" style="left:362.00px;width:176.00px;text-align:center;top:157.30px;font-size:8px;color:#000;"><i style="width:7.5px;font-size:9px">属</i><i style="width:7.5px;font-size:9px">性</i><i style="width:7.5px;font-size:9px">值</i></div>
<div style="left:538.50px;top:155.70px;width:9.00px;height:10.80px;background:linear-gradient(#FBFAF6,#ECE9DE);border-bottom:1.5px solid #B4B0A0"></div>
<div style="left:243.00px;top:166.30px;width:119.00px;height:14.35px;background:#F2EFE5;border-bottom:1px solid #D9D5C6;border-right:1px solid #D9D5C6"></div>
<div style="left:362.00px;top:166.30px;width:176.50px;height:14.35px;background:#fff;border-bottom:1px solid #D9D5C6"></div>
<div class="t" style="left:243.30px;top:169.40px;font-size:8px;color:#111;"><i style="width:7.5px;font-size:9px">网</i><i style="width:7.5px;font-size:9px">元</i><i style="width:7.5px;font-size:9px">名</i><i style="width:7.5px;font-size:9px">称</i></div>
<div class="t" style="left:363.50px;top:169.40px;font-size:8px;color:#111;"><i style="width:7.5px;font-size:9px">阳</i><i style="width:7.5px;font-size:9px">泉</i><i style="width:7.5px;font-size:9px">新</i><i style="width:7.5px;font-size:9px">大</i><i style="width:7.5px;font-size:9px">楼</i>6500-16L-5PTN</div>
<div style="left:243.00px;top:180.65px;width:119.00px;height:14.35px;background:#F2EFE5;border-bottom:1px solid #D9D5C6;border-right:1px solid #D9D5C6"></div>
<div style="left:362.00px;top:180.65px;width:176.50px;height:14.35px;background:#F2EFE5;border-bottom:1px solid #D9D5C6"></div>
<div class="t" style="left:243.30px;top:183.75px;font-size:8px;color:#111;"><i style="width:7.5px;font-size:9px">设</i><i style="width:7.5px;font-size:9px">备</i><i style="width:7.5px;font-size:9px">类</i><i style="width:7.5px;font-size:9px">型</i></div>
<div class="t" style="left:363.50px;top:183.75px;font-size:8px;color:#111;">ZXCTN 6500-16L</div>
<div style="left:243.00px;top:195.00px;width:119.00px;height:14.35px;background:#F2EFE5;border-bottom:1px solid #D9D5C6;border-right:1px solid #D9D5C6"></div>
<div style="left:362.00px;top:195.00px;width:176.50px;height:14.35px;background:#F2EFE5;border-bottom:1px solid #D9D5C6"></div>
<div class="t" style="left:243.30px;top:198.10px;font-size:8px;color:#111;"><i style="width:7.5px;font-size:9px">网</i><i style="width:7.5px;font-size:9px">元</i><i style="width:7.5px;font-size:9px">类</i><i style="width:7.5px;font-size:9px">型</i></div>
<div class="t" style="left:363.50px;top:198.10px;font-size:8px;color:#111;">NA</div>
<div style="left:243.00px;top:209.35px;width:119.00px;height:14.35px;background:#F2EFE5;border-bottom:1px solid #D9D5C6;border-right:1px solid #D9D5C6"></div>
<div style="left:362.00px;top:209.35px;width:176.50px;height:14.35px;background:#F2EFE5;border-bottom:1px solid #D9D5C6"></div>
<div class="t" style="left:243.30px;top:212.45px;font-size:8px;color:#111;"><i style="width:7.5px;font-size:9px">网</i><i style="width:7.5px;font-size:9px">管</i>ID</div>
<div class="t" style="left:363.50px;top:212.45px;font-size:8px;color:#111;">2019</div>
<div style="left:243.00px;top:223.70px;width:119.00px;height:14.35px;background:#F2EFE5;border-bottom:1px solid #D9D5C6;border-right:1px solid #D9D5C6"></div>
<div style="left:362.00px;top:223.70px;width:176.50px;height:14.35px;background:#fff;border-bottom:1px solid #D9D5C6"></div>
<div class="t" style="left:243.30px;top:226.80px;font-size:8px;color:#111;">IP<i style="width:7.5px;font-size:9px">地</i><i style="width:7.5px;font-size:9px">址</i></div>
<div class="t" style="left:363.50px;top:226.80px;font-size:8px;color:#111;">172.42.87.51</div>
<div style="left:243.00px;top:238.05px;width:119.00px;height:14.35px;background:#F2EFE5;border-bottom:1px solid #D9D5C6;border-right:1px solid #D9D5C6"></div>
<div style="left:362.00px;top:238.05px;width:176.50px;height:14.35px;background:#fff;border-bottom:1px solid #D9D5C6"></div>
<div class="t" style="left:243.30px;top:241.15px;font-size:8px;color:#111;"><i style="width:7.5px;font-size:9px">子</i><i style="width:7.5px;font-size:9px">网</i><i style="width:7.5px;font-size:9px">掩</i><i style="width:7.5px;font-size:9px">码</i></div>
<div class="t" style="left:363.50px;top:241.15px;font-size:8px;color:#111;">255.255.255.255</div>
<div style="left:243.00px;top:252.40px;width:119.00px;height:14.35px;background:#F2EFE5;border-bottom:1px solid #D9D5C6;border-right:1px solid #D9D5C6"></div>
<div style="left:362.00px;top:252.40px;width:176.50px;height:14.35px;background:#fff;border-bottom:1px solid #D9D5C6"></div>
<div class="t" style="left:243.30px;top:255.50px;font-size:8px;color:#111;"><i style="width:7.5px;font-size:9px">是</i><i style="width:7.5px;font-size:9px">否</i><i style="width:7.5px;font-size:9px">网</i><i style="width:7.5px;font-size:9px">关</i><i style="width:7.5px;font-size:9px">网</i><i style="width:7.5px;font-size:9px">元</i></div>
<div class="t" style="left:363.50px;top:255.50px;font-size:8px;color:#111;"><i style="width:7.5px;font-size:9px">否</i></div>
<div style="left:243.00px;top:266.75px;width:119.00px;height:14.35px;background:#F2EFE5;border-bottom:1px solid #D9D5C6;border-right:1px solid #D9D5C6"></div>
<div style="left:362.00px;top:266.75px;width:176.50px;height:14.35px;background:#fff;border-bottom:1px solid #D9D5C6"></div>
<div class="t" style="left:243.30px;top:269.85px;font-size:8px;color:#111;"><i style="width:7.5px;font-size:9px">网</i><i style="width:7.5px;font-size:9px">关</i><i style="width:7.5px;font-size:9px">网</i><i style="width:7.5px;font-size:9px">元</i></div>
<div class="t" style="left:363.50px;top:269.85px;font-size:8px;color:#111;"></div>
<div style="left:243.00px;top:281.10px;width:119.00px;height:14.35px;background:#F2EFE5;border-bottom:1px solid #D9D5C6;border-right:1px solid #D9D5C6"></div>
<div style="left:362.00px;top:281.10px;width:176.50px;height:14.35px;background:#F2EFE5;border-bottom:1px solid #D9D5C6"></div>
<div class="t" style="left:243.30px;top:284.20px;font-size:8px;color:#111;"><i style="width:7.5px;font-size:9px">绑</i><i style="width:7.5px;font-size:9px">定</i><i style="width:7.5px;font-size:9px">的</i>IP<i style="width:7.5px;font-size:9px">地</i><i style="width:7.5px;font-size:9px">址</i></div>
<div class="t" style="left:363.50px;top:284.20px;font-size:8px;color:#111;">127.0.0.1</div>
<div style="left:243.00px;top:295.45px;width:119.00px;height:14.35px;background:#F2EFE5;border-bottom:1px solid #D9D5C6;border-right:1px solid #D9D5C6"></div>
<div style="left:362.00px;top:295.45px;width:176.50px;height:14.35px;background:#fff;border-bottom:1px solid #D9D5C6"></div>
<div class="t" style="left:243.30px;top:298.55px;font-size:8px;color:#111;"><i style="width:7.5px;font-size:9px">在</i><i style="width:7.5px;font-size:9px">线</i><i style="width:7.5px;font-size:9px">离</i><i style="width:7.5px;font-size:9px">线</i></div>
<div class="t" style="left:363.50px;top:298.55px;font-size:8px;color:#111;"><i style="width:7.5px;font-size:9px">在</i><i style="width:7.5px;font-size:9px">线</i></div>
<div style="left:243.00px;top:309.80px;width:119.00px;height:14.35px;background:#F2EFE5;border-bottom:1px solid #D9D5C6;border-right:1px solid #D9D5C6"></div>
<div style="left:362.00px;top:309.80px;width:176.50px;height:14.35px;background:#fff;border-bottom:1px solid #D9D5C6"></div>
<div class="t" style="left:243.30px;top:312.90px;font-size:8px;color:#111;"><i style="width:7.5px;font-size:9px">硬</i><i style="width:7.5px;font-size:9px">件</i><i style="width:7.5px;font-size:9px">版</i><i style="width:7.5px;font-size:9px">本</i></div>
<div class="t" style="left:363.50px;top:312.90px;font-size:8px;color:#111;">V1.00.10R2</div>
<div style="left:243.00px;top:324.15px;width:119.00px;height:14.35px;background:#F2EFE5;border-bottom:1px solid #D9D5C6;border-right:1px solid #D9D5C6"></div>
<div style="left:362.00px;top:324.15px;width:176.50px;height:14.35px;background:#F2EFE5;border-bottom:1px solid #D9D5C6"></div>
<div class="t" style="left:243.30px;top:327.25px;font-size:8px;color:#111;"><i style="width:7.5px;font-size:9px">软</i><i style="width:7.5px;font-size:9px">件</i><i style="width:7.5px;font-size:9px">版</i><i style="width:7.5px;font-size:9px">本</i></div>
<div class="t" style="left:363.50px;top:327.25px;font-size:8px;color:#111;">V1.00</div>
<div style="left:243.00px;top:338.50px;width:119.00px;height:14.35px;background:#F2EFE5;border-bottom:1px solid #D9D5C6;border-right:1px solid #D9D5C6"></div>
<div style="left:362.00px;top:338.50px;width:176.50px;height:14.35px;background:#fff;border-bottom:1px solid #D9D5C6"></div>
<div class="t" style="left:243.30px;top:341.60px;font-size:8px;color:#111;"><i style="width:7.5px;font-size:9px">设</i><i style="width:7.5px;font-size:9px">备</i><i style="width:7.5px;font-size:9px">层</i><i style="width:7.5px;font-size:9px">次</i></div>
<div class="t" style="left:363.50px;top:341.60px;font-size:8px;color:#111;"><i style="width:7.5px;font-size:9px">无</i></div>
<div style="left:243.00px;top:352.85px;width:119.00px;height:14.35px;background:#F2EFE5;border-bottom:1px solid #D9D5C6;border-right:1px solid #D9D5C6"></div>
<div style="left:362.00px;top:352.85px;width:176.50px;height:14.35px;background:#fff;border-bottom:1px solid #D9D5C6"></div>
<div class="t" style="left:243.30px;top:355.95px;font-size:8px;color:#111;"><i style="width:7.5px;font-size:9px">业</i><i style="width:7.5px;font-size:9px">务</i><i style="width:7.5px;font-size:9px">环</i><i style="width:7.5px;font-size:9px">回</i><i style="width:7.5px;font-size:9px">地</i><i style="width:7.5px;font-size:9px">址</i></div>
<div class="t" style="left:363.50px;top:355.95px;font-size:8px;color:#111;">0.0.0.0</div>
<div style="left:243.00px;top:367.20px;width:119.00px;height:14.35px;background:#F2EFE5;border-bottom:1px solid #D9D5C6;border-right:1px solid #D9D5C6"></div>
<div style="left:362.00px;top:367.20px;width:176.50px;height:14.35px;background:#F2EFE5;border-bottom:1px solid #D9D5C6"></div>
<div class="t" style="left:243.30px;top:370.30px;font-size:8px;color:#111;"><i style="width:7.5px;font-size:9px">主</i><i style="width:7.5px;font-size:9px">机</i><i style="width:7.5px;font-size:9px">名</i><i style="width:7.5px;font-size:9px">称</i></div>
<div class="t" style="left:363.50px;top:370.30px;font-size:8px;color:#111;"></div>
<div style="left:243.00px;top:381.55px;width:119.00px;height:14.35px;background:#F2EFE5;border-bottom:1px solid #D9D5C6;border-right:1px solid #D9D5C6"></div>
<div style="left:362.00px;top:381.55px;width:176.50px;height:14.35px;background:#F2EFE5;border-bottom:1px solid #D9D5C6"></div>
<div class="t" style="left:243.30px;top:384.65px;font-size:8px;color:#111;"><i style="width:7.5px;font-size:9px">系</i><i style="width:7.5px;font-size:9px">统</i>OID</div>
<div class="t" style="left:363.50px;top:384.65px;font-size:8px;color:#111;"></div>
<div style="left:243.00px;top:395.90px;width:119.00px;height:14.35px;background:#F2EFE5;border-bottom:1px solid #D9D5C6;border-right:1px solid #D9D5C6"></div>
<div style="left:362.00px;top:395.90px;width:176.50px;height:14.35px;background:#F2EFE5;border-bottom:1px solid #D9D5C6"></div>
<div class="t" style="left:243.30px;top:399.00px;font-size:8px;color:#111;"><i style="width:7.5px;font-size:9px">系</i><i style="width:7.5px;font-size:9px">统</i><i style="width:7.5px;font-size:9px">名</i><i style="width:7.5px;font-size:9px">称</i></div>
<div class="t" style="left:363.50px;top:399.00px;font-size:8px;color:#111;"></div>
<div style="left:243.00px;top:410.25px;width:119.00px;height:14.35px;background:#F2EFE5;border-bottom:1px solid #D9D5C6;border-right:1px solid #D9D5C6"></div>
<div style="left:362.00px;top:410.25px;width:176.50px;height:14.35px;background:#F2EFE5;border-bottom:1px solid #D9D5C6"></div>
<div class="t" style="left:243.30px;top:413.35px;font-size:8px;color:#111;">MAC<i style="width:7.5px;font-size:9px">地</i><i style="width:7.5px;font-size:9px">址</i></div>
<div class="t" style="left:363.50px;top:413.35px;font-size:8px;color:#111;">34 e0 cf fe 94 30</div>
<div style="left:243.00px;top:424.60px;width:119.00px;height:14.35px;background:#F2EFE5;border-bottom:1px solid #D9D5C6;border-right:1px solid #D9D5C6"></div>
<div style="left:362.00px;top:424.60px;width:176.50px;height:14.35px;background:#fff;border-bottom:1px solid #D9D5C6"></div>
<div class="t" style="left:243.30px;top:427.70px;font-size:8px;color:#111;">MPLS-TP<i style="width:7.5px;font-size:9px">标</i><i style="width:7.5px;font-size:9px">签</i><i style="width:7.5px;font-size:9px">唯</i><i style="width:7.5px;font-size:9px">一</i><i style="width:7.5px;font-size:9px">性</i></div>
<div class="t" style="left:363.50px;top:427.70px;font-size:8px;color:#111;"><i style="width:7.5px;font-size:9px">网</i><i style="width:7.5px;font-size:9px">元</i><i style="width:7.5px;font-size:9px">内</i><i style="width:7.5px;font-size:9px">唯</i><i style="width:7.5px;font-size:9px">一</i></div>
<div style="left:243.00px;top:438.95px;width:119.00px;height:14.35px;background:#F2EFE5;border-bottom:1px solid #D9D5C6;border-right:1px solid #D9D5C6"></div>
<div style="left:362.00px;top:438.95px;width:176.50px;height:14.35px;background:#fff;border-bottom:1px solid #D9D5C6"></div>
<div class="t" style="left:243.30px;top:442.05px;font-size:8px;color:#111;">SNMP<i style="width:7.5px;font-size:9px">端</i><i style="width:7.5px;font-size:9px">口</i></div>
<div class="t" style="left:363.50px;top:442.05px;font-size:8px;color:#111;">161</div>
<div style="left:243.00px;top:453.30px;width:119.00px;height:14.35px;background:#F2EFE5;border-bottom:1px solid #D9D5C6;border-right:1px solid #D9D5C6"></div>
<div style="left:362.00px;top:453.30px;width:176.50px;height:14.35px;background:#fff;border-bottom:1px solid #D9D5C6"></div>
<div class="t" style="left:243.30px;top:456.40px;font-size:8px;color:#111;">SNMP<i style="width:7.5px;font-size:9px">团</i><i style="width:7.5px;font-size:9px">体</i><i style="width:7.5px;font-size:9px">串</i></div>
<div class="t" style="left:363.50px;top:456.40px;font-size:8px;color:#111;">public</div>
<div style="left:243.00px;top:467.65px;width:119.00px;height:14.35px;background:#F2EFE5;border-bottom:1px solid #D9D5C6;border-right:1px solid #D9D5C6"></div>
<div style="left:362.00px;top:467.65px;width:176.50px;height:14.35px;background:#fff;border-bottom:1px solid #D9D5C6"></div>
<div class="t" style="left:243.30px;top:470.75px;font-size:8px;color:#111;">SNMP<i style="width:7.5px;font-size:9px">写</i><i style="width:7.5px;font-size:9px">团</i><i style="width:7.5px;font-size:9px">体</i><i style="width:7.5px;font-size:9px">串</i></div>
<div class="t" style="left:363.50px;top:470.75px;font-size:8px;color:#111;">private</div>
<div style="left:243.00px;top:482.00px;width:119.00px;height:14.35px;background:#F2EFE5;border-bottom:1px solid #D9D5C6;border-right:1px solid #D9D5C6"></div>
<div style="left:362.00px;top:482.00px;width:176.50px;height:14.35px;background:#fff;border-bottom:1px solid #D9D5C6"></div>
<div class="t" style="left:243.30px;top:485.10px;font-size:8px;color:#111;">SNMP<i style="width:7.5px;font-size:9px">超</i><i style="width:7.5px;font-size:9px">时</i>(<i style="width:7.5px;font-size:9px">秒</i>)</div>
<div class="t" style="left:363.50px;top:485.10px;font-size:8px;color:#111;">5</div>
<div style="left:243.00px;top:496.35px;width:119.00px;height:14.35px;background:#F2EFE5;border-bottom:1px solid #D9D5C6;border-right:1px solid #D9D5C6"></div>
<div style="left:362.00px;top:496.35px;width:176.50px;height:14.35px;background:#fff;border-bottom:1px solid #D9D5C6"></div>
<div class="t" style="left:243.30px;top:499.45px;font-size:8px;color:#111;">SNMP<i style="width:7.5px;font-size:9px">重</i><i style="width:7.5px;font-size:9px">试</i><i style="width:7.5px;font-size:9px">次</i><i style="width:7.5px;font-size:9px">数</i></div>
<div class="t" style="left:363.50px;top:499.45px;font-size:8px;color:#111;">1</div>
<div style="left:243.00px;top:510.70px;width:119.00px;height:2.80px;background:#F2EFE5;border-bottom:1px solid #D9D5C6;border-right:1px solid #D9D5C6"></div>
<div style="left:362.00px;top:510.70px;width:176.50px;height:2.80px;background:#fff;border-bottom:1px solid #D9D5C6"></div>
<div class="t" style="left:243.30px;top:513.80px;font-size:8px;color:#111;"></div>
<div class="t" style="left:363.50px;top:513.80px;font-size:8px;color:#111;"></div>
<div style="left:538.50px;top:166.50px;width:9.00px;height:347.00px;background:linear-gradient(90deg,#EEEBE0,#FBFAF7)"></div>
<div style="left:538.50px;top:167.00px;width:9.00px;height:9.50px;background:linear-gradient(#FFFFFF,#E8E5D8);border:1px solid #B8B4A2;border-radius:1px"></div>
<svg style="position:absolute;left:540px;top:170px" width="6" height="4" viewBox="0 0 6 4"><path d="M0 3.5 H6 L3 0 Z" fill="#222"/></svg>
<div style="left:539.00px;top:177.00px;width:8.50px;height:193.00px;background:linear-gradient(90deg,#C2D6F4,#A6C0EC);border:1px solid #94AEDA;border-radius:1px"></div>
<div style="left:538.50px;top:504.50px;width:9.00px;height:9.00px;background:linear-gradient(#FFFFFF,#E8E5D8);border:1px solid #B8B4A2;border-radius:1px"></div>
<svg style="position:absolute;left:540.5px;top:508px" width="5" height="3" viewBox="0 0 6 4"><path d="M0 0 H6 L3 3.5 Z" fill="#111"/></svg>
<div style="left:482.00px;top:519.00px;width:65.60px;height:13.00px;background:linear-gradient(#FFFFFF,#F3F1E8 60%,#E2DECE);border:1px solid #8A8676;border-radius:2px"></div>
<div class="t" style="left:482.00px;width:65.60px;text-align:center;top:521.50px;font-size:8px;color:#000;"><i style="width:7.5px;font-size:9px">机</i><i style="width:7.5px;font-size:9px">架</i><i style="width:7.5px;font-size:9px">子</i><i style="width:7.5px;font-size:9px">架</i><i style="width:7.5px;font-size:9px">配</i><i style="width:7.5px;font-size:9px">置</i></div>
<div style="left:474.60px;top:546.80px;width:37.40px;height:13.00px;background:linear-gradient(#FFFFFF,#F3F1E8 60%,#E2DECE);border:1px solid #8A8676;border-radius:2px"></div>
<div class="t" style="left:474.60px;width:37.40px;text-align:center;top:549.30px;font-size:8px;color:#000;"><i style="width:7.5px;font-size:9px">应</i><i style="width:7.5px;font-size:9px">用</i></div>
<div style="left:516.70px;top:546.80px;width:36.50px;height:13.00px;background:linear-gradient(#FFFFFF,#F3F1E8 60%,#E2DECE);border:1px solid #8A8676;border-radius:2px"></div>
<div class="t" style="left:516.70px;width:36.50px;text-align:center;top:549.30px;font-size:8px;color:#000;"><i style="width:7.5px;font-size:9px">关</i><i style="width:7.5px;font-size:9px">闭</i></div>
</body></html>
